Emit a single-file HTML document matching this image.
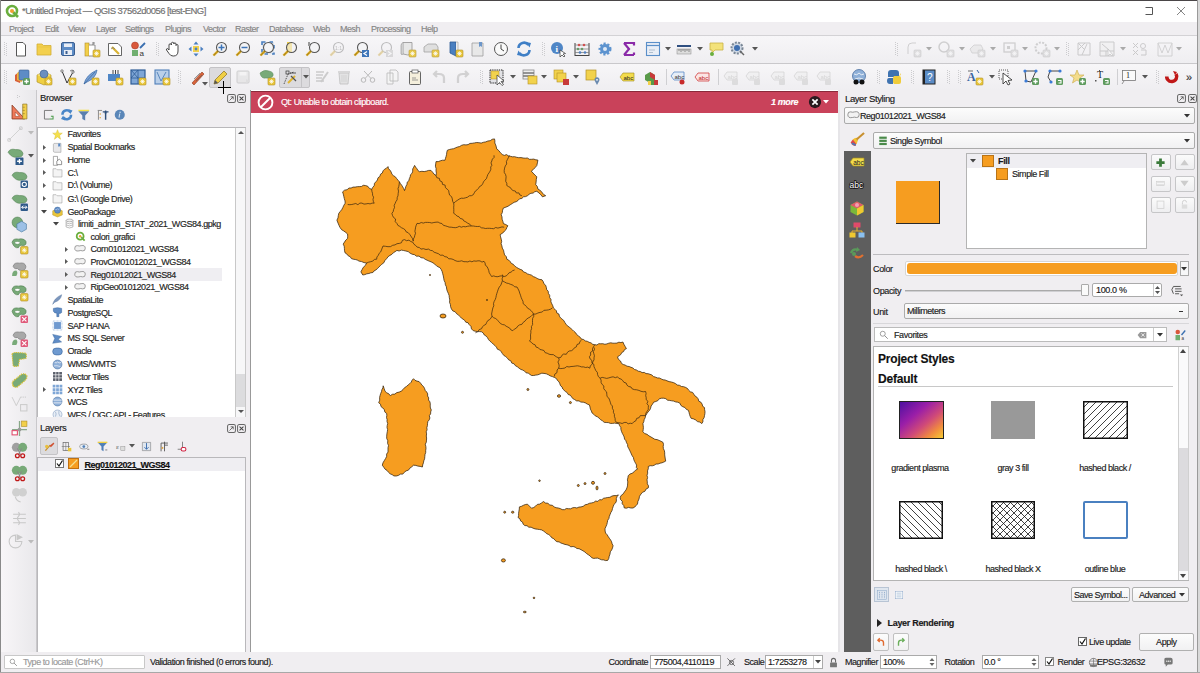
<!DOCTYPE html><html><head><meta charset="utf-8"><style>
*{margin:0;padding:0;box-sizing:border-box}
html,body{width:1200px;height:673px;overflow:hidden;background:#f0eef1;font-family:"Liberation Sans",sans-serif;position:relative}
.a{position:absolute}
.t{position:absolute;font-size:9px;line-height:12px;white-space:nowrap;color:#1a1a1a;letter-spacing:-0.35px;-webkit-text-stroke:0.15px currentColor}
svg.a{overflow:visible}
</style></head><body><div class="a" style="left:0px;top:0px;width:1200px;height:1px;background:#4a4648"></div>
<div class="a" style="left:1197px;top:0px;width:3px;height:673px;background:#d9d9d9"></div>
<div class="a" style="left:1197px;top:0px;width:1px;height:673px;background:#9a9a9a"></div>
<div class="a" style="left:0px;top:0px;width:1px;height:673px;background:#8a8a8a"></div>
<div class="a" style="left:1px;top:1px;width:1196px;height:21px;background:#fff"></div>
<svg class="a" style="left:5px;top:4px;" width="14" height="14" viewBox="0 0 14 14"><circle cx="7" cy="7" r="5" fill="none" stroke="#6aae3e" stroke-width="2.6"/><path d="M8,8 L13,13" stroke="#6aae3e" stroke-width="2.6"/><circle cx="7" cy="7" r="2" fill="#f0a030"/></svg>
<div class="t" style="left:22px;top:5px;color:#707070;font-size:9.5px;letter-spacing:-0.55px">*Untitled Project — QGIS 37562d0056 [test-ENG]</div>
<svg class="a" style="left:1145px;top:7px;" width="8" height="8" viewBox="0 0 8 8"><path d="M0.5,0.5 H7.5 V7.5 H0.5" fill="none" stroke="#555" stroke-width="1"/></svg>
<svg class="a" style="left:1177px;top:7px;" width="8" height="8" viewBox="0 0 8 8"><path d="M0,0 L8,8 M8,0 L0,8" stroke="#777" stroke-width="0.9"/></svg>
<div class="a" style="left:1px;top:22px;width:1196px;height:14px;background:#f0eef1"></div>
<div class="t" style="left:9px;top:22.8px;color:#858585;font-size:9px;letter-spacing:-0.5px">Project</div>
<div class="t" style="left:45px;top:22.8px;color:#858585;font-size:9px;letter-spacing:-0.5px">Edit</div>
<div class="t" style="left:68px;top:22.8px;color:#858585;font-size:9px;letter-spacing:-0.5px">View</div>
<div class="t" style="left:96px;top:22.8px;color:#858585;font-size:9px;letter-spacing:-0.5px">Layer</div>
<div class="t" style="left:125px;top:22.8px;color:#858585;font-size:9px;letter-spacing:-0.5px">Settings</div>
<div class="t" style="left:165px;top:22.8px;color:#858585;font-size:9px;letter-spacing:-0.5px">Plugins</div>
<div class="t" style="left:203px;top:22.8px;color:#858585;font-size:9px;letter-spacing:-0.5px">Vector</div>
<div class="t" style="left:235px;top:22.8px;color:#858585;font-size:9px;letter-spacing:-0.5px">Raster</div>
<div class="t" style="left:269px;top:22.8px;color:#858585;font-size:9px;letter-spacing:-0.5px">Database</div>
<div class="t" style="left:313px;top:22.8px;color:#858585;font-size:9px;letter-spacing:-0.5px">Web</div>
<div class="t" style="left:340px;top:22.8px;color:#858585;font-size:9px;letter-spacing:-0.5px">Mesh</div>
<div class="t" style="left:371px;top:22.8px;color:#858585;font-size:9px;letter-spacing:-0.5px">Processing</div>
<div class="t" style="left:421px;top:22.8px;color:#858585;font-size:9px;letter-spacing:-0.5px">Help</div>
<div class="a" style="left:1px;top:35px;width:1196px;height:1px;background:#d3d2d5"></div>
<div class="a" style="left:1px;top:36px;width:1196px;height:27px;background:linear-gradient(#f7f6f8,#efeef1)"></div>
<div class="a" style="left:1px;top:63px;width:1196px;height:1px;background:#c9c8cb"></div>
<div class="a" style="left:1px;top:64px;width:1196px;height:26px;background:linear-gradient(#f7f6f8,#efeef1)"></div>
<svg class="a" style="left:3.5px;top:42.0px" width="3" height="14" viewBox="0 0 3 14"><path d="M0.5,0 V14 M2.5,1 V14" stroke="#b5b5b8" stroke-width="0.8" stroke-dasharray="0.8 1.2"/></svg>
<svg class="a" style="left:13.0px;top:41.0px;" width="16" height="16" viewBox="0 0 16 16"><path d="M3.5,1.5 H10 L12.5,4 V15 H3.5Z" fill="#fff" stroke="#555" stroke-width="1"/></svg>
<svg class="a" style="left:36.0px;top:41.0px;" width="16" height="16" viewBox="0 0 16 16"><path d="M1,3 H6 L7.5,4.5 H15 V14 H1Z" fill="#f3d04e" stroke="#d2ad33" stroke-width="0.8"/><path d="M1,6 H15" stroke="#e6c040" stroke-width="0.6"/></svg>
<svg class="a" style="left:59.5px;top:41.0px;" width="16" height="16" viewBox="0 0 16 16"><rect x="1.5" y="1.5" width="13" height="13" rx="1.5" fill="#5d8cc6" stroke="#3b5f91" stroke-width="1"/><rect x="4" y="2.5" width="8" height="3.5" fill="#e8edf5"/><rect x="4" y="9" width="8" height="5" fill="#e8edf5"/><rect x="5.5" y="10" width="2" height="3" fill="#3b5f91"/></svg>
<svg class="a" style="left:84.0px;top:41.0px;" width="16" height="16" viewBox="0 0 16 16"><rect x="1" y="2" width="4" height="13" fill="#f2cf4a" stroke="#b08c2a" stroke-width="0.6"/><path d="M5,4 H11 V15 H5" fill="#fff" stroke="#777" stroke-width="0.8"/><path d="M9,1 V4 M9,2 h2" stroke="#555" stroke-width="0.7"/><rect x="9" y="9" width="7" height="7" rx="1" fill="#e9c73c" stroke="#b39027" stroke-width="0.6"/><path d="M12.5,10.3 v4.4 M10.3,12.5 h4.4 M11,11 l3,3 M14,11 l-3,3" stroke="#fff" stroke-width="0.7"/></svg>
<svg class="a" style="left:107.0px;top:41.0px;" width="16" height="16" viewBox="0 0 16 16"><path d="M1.5,2.5 H11 L14.5,6 V14.5 H1.5Z" fill="#fff" stroke="#555" stroke-width="0.9"/><path d="M5,6 L12,13" stroke="#d9b334" stroke-width="2.2"/><path d="M4,8 q2,-3 4,0" fill="none" stroke="#777" stroke-width="0.7"/></svg>
<svg class="a" style="left:129.5px;top:41.0px;" width="16" height="16" viewBox="0 0 16 16"><circle cx="5" cy="4.5" r="3.5" fill="#d9583b" stroke="#a03020" stroke-width="0.5"/><rect x="2" y="9" width="6" height="6" fill="#6fae6f"/><path d="M10,7 L15,2" stroke="#3a6fb0" stroke-width="1.8"/><text x="9.5" y="15" font-size="8" font-family="Liberation Sans" fill="#333">a</text></svg>
<svg class="a" style="left:156.0px;top:42.0px" width="3" height="14" viewBox="0 0 3 14"><path d="M0.5,0 V14 M2.5,1 V14" stroke="#b5b5b8" stroke-width="0.8" stroke-dasharray="0.8 1.2"/></svg>
<svg class="a" style="left:165.0px;top:41.0px;" width="16" height="16" viewBox="0 0 16 16"><path d="M4,9 V4 q0,-1.2 1.2,-1.2 q1.2,0 1.2,1.2 V2.5 q0,-1.2 1.2,-1.2 q1.2,0 1.2,1.2 V3 q0,-1.1 1.1,-1.1 q1.1,0 1.1,1.1 V4.5 q0,-1 1,-1 q1,0 1,1 V10 q0,5 -4.5,5 H8 q-2.5,0 -4,-2.5 L1.5,9 q-0.5,-1.2 0.8,-1.4 q0.9,-0.1 1.7,1.4Z" fill="#fff" stroke="#333" stroke-width="0.9"/></svg>
<svg class="a" style="left:188.0px;top:41.0px;" width="16" height="16" viewBox="0 0 16 16"><rect x="5" y="5" width="6" height="6" fill="#f2d24c"/><path d="M8,0.5 L10.5,3.5 H5.5Z M8,15.5 L10.5,12.5 H5.5Z M0.5,8 L3.5,5.5 V10.5Z M15.5,8 L12.5,5.5 V10.5Z" fill="#4a7fc0"/><circle cx="8" cy="8" r="1.4" fill="#4a7fc0"/></svg>
<svg class="a" style="left:212.0px;top:41.0px;" width="16" height="16" viewBox="0 0 16 16"><circle cx="9.5" cy="6.5" r="5" fill="#f4f4f6" stroke="#555" stroke-width="1.1"/><path d="M9.5,3.5 v6 M6.5,6.5 h6" stroke="#3d74b8" stroke-width="1.5"/><path d="M6,10 L1.5,14.5" stroke="#d6a51c" stroke-width="2.4"/><path d="M6,10 L1.5,14.5" stroke="#333" stroke-width="0.6" stroke-dasharray="1 1.5"/></svg>
<svg class="a" style="left:235.3px;top:41.0px;" width="16" height="16" viewBox="0 0 16 16"><circle cx="9.5" cy="6.5" r="5" fill="#f4f4f6" stroke="#555" stroke-width="1.1"/><path d="M6.5,6.5 h6" stroke="#3d74b8" stroke-width="1.5"/><path d="M6,10 L1.5,14.5" stroke="#d6a51c" stroke-width="2.4"/><path d="M6,10 L1.5,14.5" stroke="#333" stroke-width="0.6" stroke-dasharray="1 1.5"/></svg>
<svg class="a" style="left:258.7px;top:41.0px;" width="16" height="16" viewBox="0 0 16 16"><rect x="3" y="1" width="12" height="12" fill="#dfe6ef" stroke="#4a7fc0" stroke-width="1.6" stroke-dasharray="3.5 4"/><circle cx="9.5" cy="6.5" r="5" fill="#f4f4f6" stroke="#555" stroke-width="1.1"/><path d="M6,10 L1.5,14.5" stroke="#d6a51c" stroke-width="2.4"/><path d="M6,10 L1.5,14.5" stroke="#333" stroke-width="0.6" stroke-dasharray="1 1.5"/></svg>
<svg class="a" style="left:282.0px;top:41.0px;" width="16" height="16" viewBox="0 0 16 16"><rect x="5" y="1" width="5" height="10" fill="#f2d24c"/><circle cx="9.5" cy="6.5" r="5" fill="#f4f4f6" fill-opacity="0.6" stroke="#555" stroke-width="1.1"/><path d="M6,10 L1.5,14.5" stroke="#d6a51c" stroke-width="2.4"/><path d="M6,10 L1.5,14.5" stroke="#333" stroke-width="0.6" stroke-dasharray="1 1.5"/></svg>
<svg class="a" style="left:305.3px;top:41.0px;" width="16" height="16" viewBox="0 0 16 16"><circle cx="9.5" cy="6.5" r="5" fill="#f4f4f6" stroke="#555" stroke-width="1.1"/><rect x="3" y="1" width="2" height="4" fill="#999"/><path d="M6,10 L1.5,14.5" stroke="#d6a51c" stroke-width="2.4"/><path d="M6,10 L1.5,14.5" stroke="#333" stroke-width="0.6" stroke-dasharray="1 1.5"/></svg>
<svg class="a" style="left:328.7px;top:41.0px;opacity:0.35;" width="16" height="16" viewBox="0 0 16 16"><circle cx="9.5" cy="6.5" r="5" fill="#f4f4f6" stroke="#555" stroke-width="1.1"/><text x="6" y="9" font-size="5" fill="#555">1:1</text><path d="M6,10 L1.5,14.5" stroke="#d6a51c" stroke-width="2.4"/><path d="M6,10 L1.5,14.5" stroke="#333" stroke-width="0.6" stroke-dasharray="1 1.5"/></svg>
<svg class="a" style="left:352.8px;top:41.0px;" width="16" height="16" viewBox="0 0 16 16"><circle cx="9.5" cy="6.5" r="5" fill="#f4f4f6" stroke="#555" stroke-width="1.1"/><path d="M6,10 L1.5,14.5" stroke="#d6a51c" stroke-width="2.4"/><path d="M6,10 L1.5,14.5" stroke="#333" stroke-width="0.6" stroke-dasharray="1 1.5"/><rect x="9" y="9" width="7" height="7" fill="#3d74b8"/><path d="M14,10.5 L11,12.5 L14,14.5" fill="none" stroke="#fff" stroke-width="1.2"/></svg>
<svg class="a" style="left:377.0px;top:41.0px;opacity:0.35;" width="16" height="16" viewBox="0 0 16 16"><circle cx="9.5" cy="6.5" r="5" fill="#f4f4f6" stroke="#555" stroke-width="1.1"/><path d="M6,10 L1.5,14.5" stroke="#d6a51c" stroke-width="2.4"/><path d="M6,10 L1.5,14.5" stroke="#333" stroke-width="0.6" stroke-dasharray="1 1.5"/><rect x="9" y="9" width="7" height="7" fill="#aaa"/><path d="M11,10.5 L14,12.5 L11,14.5" fill="none" stroke="#fff" stroke-width="1.2"/></svg>
<svg class="a" style="left:399.5px;top:41.0px;opacity:0.9;" width="16" height="16" viewBox="0 0 16 16"><path d="M3,1.5 H12 V13 q-4,2 -9,0Z" fill="#e6e6e6" stroke="#888" stroke-width="0.8"/><path d="M3,1.5 q-2,1 -2,3 V13 q1,1.5 2,0" fill="#ccc" stroke="#888" stroke-width="0.6"/><rect x="9" y="9" width="7" height="7" rx="1" fill="#e9c73c" stroke="#b39027" stroke-width="0.6"/><path d="M12.5,10.3 v4.4 M10.3,12.5 h4.4 M11,11 l3,3 M14,11 l-3,3" stroke="#fff" stroke-width="0.7"/></svg>
<svg class="a" style="left:422.8px;top:41.0px;opacity:0.9;" width="16" height="16" viewBox="0 0 16 16"><path d="M1,6 L5,3 H13 L15,6 V11 H1Z" fill="#ddd" stroke="#999" stroke-width="0.8"/><rect x="9" y="9" width="7" height="7" rx="1" fill="#e9c73c" stroke="#b39027" stroke-width="0.6"/><path d="M12.5,10.3 v4.4 M10.3,12.5 h4.4 M11,11 l3,3 M14,11 l-3,3" stroke="#fff" stroke-width="0.7"/></svg>
<svg class="a" style="left:447.0px;top:41.0px;" width="16" height="16" viewBox="0 0 16 16"><path d="M3,1 H9 V15 L3,12Z" fill="#4a7fc0" stroke="#2e5c96" stroke-width="0.8"/><path d="M9,1 H11 V14 H9" fill="#eee" stroke="#999" stroke-width="0.6"/><rect x="9" y="9" width="7" height="7" rx="1" fill="#e9c73c" stroke="#b39027" stroke-width="0.6"/><path d="M12.5,10.3 v4.4 M10.3,12.5 h4.4 M11,11 l3,3 M14,11 l-3,3" stroke="#fff" stroke-width="0.7"/></svg>
<svg class="a" style="left:469.5px;top:41.0px;opacity:0.8;" width="16" height="16" viewBox="0 0 16 16"><path d="M2,2 H13 V15 H2Z" fill="#e6e6e6" stroke="#888" stroke-width="0.8"/><path d="M9,1 V6 L10.5,5 L12,6 V1" fill="#4a7fc0"/></svg>
<svg class="a" style="left:492.8px;top:41.0px;" width="16" height="16" viewBox="0 0 16 16"><circle cx="8" cy="8" r="6.5" fill="#fafafa" stroke="#555" stroke-width="1"/><path d="M8,3.5 V8 L11,10" fill="none" stroke="#444" stroke-width="1"/></svg>
<svg class="a" style="left:516.2px;top:41.0px;" width="16" height="16" viewBox="0 0 16 16"><path d="M2.5,7 A5.5,5.5 0 0 1 12.5,4" fill="none" stroke="#3f7fc6" stroke-width="2.6"/><path d="M13.5,9 A5.5,5.5 0 0 1 3.5,12" fill="none" stroke="#3f7fc6" stroke-width="2.6"/><path d="M10,1 L15,2 L13.5,6.5Z M6,15 L1,14 L2.5,9.5Z" fill="#3f7fc6"/></svg>
<svg class="a" style="left:541.8px;top:42.0px" width="3" height="14" viewBox="0 0 3 14"><path d="M0.5,0 V14 M2.5,1 V14" stroke="#b5b5b8" stroke-width="0.8" stroke-dasharray="0.8 1.2"/></svg>
<svg class="a" style="left:549.5px;top:41.0px;" width="16" height="16" viewBox="0 0 16 16"><circle cx="7" cy="7" r="6" fill="#4f86c6"/><text x="5.5" y="11" font-size="9" font-weight="bold" fill="#fff" font-family="Liberation Serif">i</text><path d="M10,9 L10,16 L12,14 L14,16 L15,15 L13,13 L15.5,12.5Z" fill="#fff" stroke="#333" stroke-width="0.7"/></svg>
<svg class="a" style="left:573.7px;top:41.0px;" width="16" height="16" viewBox="0 0 16 16"><path d="M1,2 V15 M15,2 V15 M1,14.5 H15" stroke="#444" stroke-width="1"/><path d="M1,4 H15 M1,8 H15 M1,11.5 H15" stroke="#777" stroke-width="0.7"/><circle cx="5" cy="4" r="1.3" fill="#d05050"/><circle cx="10" cy="4" r="1.3" fill="#d05050"/><circle cx="4" cy="8" r="1.3" fill="#6a9a6a"/><circle cx="8" cy="8" r="1.3" fill="#6a9a6a"/><circle cx="6" cy="11.5" r="1.3" fill="#5080c0"/><circle cx="11" cy="11.5" r="1.3" fill="#5080c0"/></svg>
<svg class="a" style="left:597.0px;top:41.0px;" width="16" height="16" viewBox="0 0 16 16"><circle cx="8" cy="8" r="5" fill="#5d93cf" stroke="#5d93cf" stroke-width="3" stroke-dasharray="2 1.6"/><circle cx="8" cy="8" r="2" fill="#dfe9f5"/></svg>
<svg class="a" style="left:621.0px;top:41.0px;" width="16" height="16" viewBox="0 0 16 16"><path d="M3,2 H13 V4.5 M13,14 V11.5 M3,14 H13 M3,2 L8,8 L3,14" fill="none" stroke="#8a2aa8" stroke-width="2.2"/></svg>
<svg class="a" style="left:644.5px;top:41.0px;" width="16" height="16" viewBox="0 0 16 16"><rect x="1.5" y="1.5" width="13" height="13" fill="#e9eef6" stroke="#5b8fc9" stroke-width="1.1"/><path d="M1.5,4.5 H14.5" stroke="#5b8fc9" stroke-width="1.2"/><path d="M4,9 H10 M4,11.5 H8" stroke="#9ab" stroke-width="0.7"/></svg>
<svg class="a" style="left:665.3px;top:47px" width="6" height="4" viewBox="0 0 6 4"><path d="M0,0 H6 L3,3.5Z" fill="#555"/></svg>
<svg class="a" style="left:676.2px;top:41.0px;" width="16" height="16" viewBox="0 0 16 16"><rect x="1" y="4" width="14" height="2" fill="#2f4f80"/><rect x="1" y="8" width="14" height="5" fill="#ddd" stroke="#888" stroke-width="0.5"/><path d="M3,8 v2 M5,8 v3 M7,8 v2 M9,8 v3 M11,8 v2 M13,8 v3" stroke="#555" stroke-width="0.6"/></svg>
<svg class="a" style="left:697px;top:47px" width="6" height="4" viewBox="0 0 6 4"><path d="M0,0 H6 L3,3.5Z" fill="#555"/></svg>
<svg class="a" style="left:707.8px;top:41.0px;" width="16" height="16" viewBox="0 0 16 16"><path d="M2,2 H15 V9 H7 L4,12 V9 H2Z" fill="#f3e27a" stroke="#c9b344" stroke-width="0.8"/><circle cx="4" cy="13" r="2" fill="#6aae3e"/></svg>
<svg class="a" style="left:730.3px;top:41.0px;" width="16" height="16" viewBox="0 0 16 16"><circle cx="7" cy="7" r="5.5" fill="#cfd8e4" stroke="#7a8796" stroke-width="2" stroke-dasharray="2 1.3"/><circle cx="7" cy="7" r="3" fill="#3f6fb0"/><path d="M10,10 L14,14" stroke="#666" stroke-width="1.5"/></svg>
<svg class="a" style="left:752px;top:47px" width="6" height="4" viewBox="0 0 6 4"><path d="M0,0 H6 L3,3.5Z" fill="#555"/></svg>
<svg class="a" style="left:895.2px;top:42.0px" width="3" height="14" viewBox="0 0 3 14"><path d="M0.5,0 V14 M2.5,1 V14" stroke="#b5b5b8" stroke-width="0.8" stroke-dasharray="0.8 1.2"/></svg>
<svg class="a" style="left:904.5px;top:41.0px;opacity:0.4;filter:grayscale(1);" width="16" height="16" viewBox="0 0 16 16"><path d="M3,13 V6 q0,-4 4,-4 H11" fill="none" stroke="#999" stroke-width="1"/><rect x="9" y="9" width="7" height="7" rx="1" fill="#e9c73c" stroke="#b39027" stroke-width="0.6"/><path d="M12.5,10.3 v4.4 M10.3,12.5 h4.4 M11,11 l3,3 M14,11 l-3,3" stroke="#fff" stroke-width="0.7"/></svg>
<svg class="a" style="left:926px;top:47px" width="6" height="4" viewBox="0 0 6 4"><path d="M0,0 H6 L3,3.5Z" fill="#aaa"/></svg>
<svg class="a" style="left:937.8px;top:41.0px;opacity:0.4;filter:grayscale(1);" width="16" height="16" viewBox="0 0 16 16"><circle cx="6" cy="6" r="5" fill="none" stroke="#999" stroke-width="1.5"/><rect x="9" y="9" width="7" height="7" rx="1" fill="#e9c73c" stroke="#b39027" stroke-width="0.6"/><path d="M12.5,10.3 v4.4 M10.3,12.5 h4.4 M11,11 l3,3 M14,11 l-3,3" stroke="#fff" stroke-width="0.7"/></svg>
<svg class="a" style="left:958.5px;top:47px" width="6" height="4" viewBox="0 0 6 4"><path d="M0,0 H6 L3,3.5Z" fill="#aaa"/></svg>
<svg class="a" style="left:969.0px;top:41.0px;opacity:0.4;filter:grayscale(1);" width="16" height="16" viewBox="0 0 16 16"><path d="M1,8 L5,4 H12 L14,8 L10,12 H3Z" fill="#ddd" stroke="#999" stroke-width="0.8"/><rect x="9" y="9" width="7" height="7" rx="1" fill="#e9c73c" stroke="#b39027" stroke-width="0.6"/><path d="M12.5,10.3 v4.4 M10.3,12.5 h4.4 M11,11 l3,3 M14,11 l-3,3" stroke="#fff" stroke-width="0.7"/></svg>
<svg class="a" style="left:989.7px;top:47px" width="6" height="4" viewBox="0 0 6 4"><path d="M0,0 H6 L3,3.5Z" fill="#aaa"/></svg>
<svg class="a" style="left:1002.4px;top:41.0px;opacity:0.4;filter:grayscale(1);" width="16" height="16" viewBox="0 0 16 16"><rect x="2" y="2" width="11" height="9" fill="none" stroke="#999" stroke-width="1.3"/><rect x="5" y="5" width="3" height="3" fill="#999"/><rect x="9" y="9" width="7" height="7" rx="1" fill="#e9c73c" stroke="#b39027" stroke-width="0.6"/><path d="M12.5,10.3 v4.4 M10.3,12.5 h4.4 M11,11 l3,3 M14,11 l-3,3" stroke="#fff" stroke-width="0.7"/></svg>
<svg class="a" style="left:1022px;top:47px" width="6" height="4" viewBox="0 0 6 4"><path d="M0,0 H6 L3,3.5Z" fill="#aaa"/></svg>
<svg class="a" style="left:1033.7px;top:41.0px;opacity:0.4;filter:grayscale(1);" width="16" height="16" viewBox="0 0 16 16"><circle cx="7" cy="7" r="5.5" fill="none" stroke="#999" stroke-width="2" stroke-dasharray="2 1.3"/><rect x="9" y="9" width="7" height="7" rx="1" fill="#e9c73c" stroke="#b39027" stroke-width="0.6"/><path d="M12.5,10.3 v4.4 M10.3,12.5 h4.4 M11,11 l3,3 M14,11 l-3,3" stroke="#fff" stroke-width="0.7"/></svg>
<svg class="a" style="left:1054.3px;top:47px" width="6" height="4" viewBox="0 0 6 4"><path d="M0,0 H6 L3,3.5Z" fill="#aaa"/></svg>
<svg class="a" style="left:1066.2px;top:42.0px" width="3" height="14" viewBox="0 0 3 14"><path d="M0.5,0 V14 M2.5,1 V14" stroke="#b5b5b8" stroke-width="0.8" stroke-dasharray="0.8 1.2"/></svg>
<svg class="a" style="left:1076.4px;top:41.0px;opacity:0.45;filter:grayscale(1);" width="16" height="16" viewBox="0 0 16 16"><path d="M2,2 H14 V14 H2Z M2,2 L9,9 M2,9 L9,2 M11,3 L6,14" fill="none" stroke="#999" stroke-width="1"/></svg>
<svg class="a" style="left:1099.3px;top:41.0px;opacity:0.45;filter:grayscale(1);" width="16" height="16" viewBox="0 0 16 16"><path d="M1,1 H15 V15 H1Z M1,10 H15 M7,10 V15 M3,3 L10,9" fill="#eee" stroke="#999" stroke-width="1"/><path d="M9,8 L9,15 L11,13 L13,15 L14,14Z" fill="#fff" stroke="#888" stroke-width="0.7"/></svg>
<svg class="a" style="left:1120px;top:47px" width="6" height="4" viewBox="0 0 6 4"><path d="M0,0 H6 L3,3.5Z" fill="#aaa"/></svg>
<svg class="a" style="left:1131.6px;top:41.0px;opacity:0.45;filter:grayscale(1);" width="16" height="16" viewBox="0 0 16 16"><path d="M1,2 L6,7 M6,2 L1,7 M1,9 L6,14 M6,9 L1,14" stroke="#999" stroke-width="1"/><circle cx="11" cy="5" r="2.5" fill="none" stroke="#999"/><path d="M9,9 H14 V14 H9" fill="none" stroke="#999"/></svg>
<svg class="a" style="left:1156.6px;top:41.0px;opacity:0.45;filter:grayscale(1);" width="16" height="16" viewBox="0 0 16 16"><path d="M1,2 H15 V15 H1Z M1,2 L5,12 L8,4 L11,12 L15,2" fill="none" stroke="#aaa" stroke-width="1"/></svg>
<svg class="a" style="left:1176px;top:47px" width="6" height="4" viewBox="0 0 6 4"><path d="M0,0 H6 L3,3.5Z" fill="#aaa"/></svg>
<svg class="a" style="left:3.5px;top:70.0px" width="3" height="14" viewBox="0 0 3 14"><path d="M0.5,0 V14 M2.5,1 V14" stroke="#b5b5b8" stroke-width="0.8" stroke-dasharray="0.8 1.2"/></svg>
<svg class="a" style="left:13.7px;top:69.0px;" width="16" height="16" viewBox="0 0 16 16"><path d="M1,6 L5,3 L8,5 L6,14 L1,12Z" fill="#d75f3a"/><path d="M3,4 L7,2 L10,4 L8,13 L3,11Z" fill="#f0b43c"/><rect x="5" y="1" width="10" height="10" rx="1" fill="#5d8cc6" stroke="#3b5f91" stroke-width="0.6"/><rect x="9" y="9" width="7" height="7" rx="1.5" fill="#5e9b5e"/><path d="M12.5,10.3 v4.4 M10.3,12.5 h4.4" stroke="#fff" stroke-width="1.4"/></svg>
<svg class="a" style="left:36.0px;top:69.0px;" width="16" height="16" viewBox="0 0 16 16"><path d="M1,6 L8,3 L15,6 V13 L8,16 L1,13Z" fill="#efcf42" stroke="#a88a20" stroke-width="0.6"/><path d="M1,6 L8,9 L15,6 L8,3Z" fill="#f6e07a"/><circle cx="8" cy="5" r="4" fill="#6a8fc0" stroke="#3b5f91" stroke-width="0.6"/><rect x="9" y="9" width="7" height="7" rx="1" fill="#e9c73c" stroke="#b39027" stroke-width="0.6"/><path d="M12.5,10.3 v4.4 M10.3,12.5 h4.4 M11,11 l3,3 M14,11 l-3,3" stroke="#fff" stroke-width="0.7"/></svg>
<svg class="a" style="left:60.0px;top:69.0px;" width="16" height="16" viewBox="0 0 16 16"><path d="M2,2 L7,14 L13,3" fill="none" stroke="#333" stroke-width="1"/><circle cx="2" cy="2" r="1.2" fill="#fff" stroke="#333" stroke-width="0.6"/><circle cx="13" cy="3" r="1.2" fill="#fff" stroke="#333" stroke-width="0.6"/><path d="M10,2 q2,-2 4,0" fill="none" stroke="#333" stroke-width="0.6"/><rect x="9" y="9" width="7" height="7" rx="1" fill="#e9c73c" stroke="#b39027" stroke-width="0.6"/><path d="M12.5,10.3 v4.4 M10.3,12.5 h4.4 M11,11 l3,3 M14,11 l-3,3" stroke="#fff" stroke-width="0.7"/></svg>
<svg class="a" style="left:83.0px;top:69.0px;" width="16" height="16" viewBox="0 0 16 16"><path d="M1,15 Q3,6 14,1 Q13,9 4,13Z" fill="#7aa3d6" stroke="#3b6aa8" stroke-width="0.7"/><path d="M1,15 L12,3" stroke="#2f5a90" stroke-width="0.6"/><rect x="9" y="9" width="7" height="7" rx="1" fill="#e9c73c" stroke="#b39027" stroke-width="0.6"/><path d="M12.5,10.3 v4.4 M10.3,12.5 h4.4 M11,11 l3,3 M14,11 l-3,3" stroke="#fff" stroke-width="0.7"/></svg>
<svg class="a" style="left:107.0px;top:69.0px;" width="16" height="16" viewBox="0 0 16 16"><rect x="1" y="5" width="12" height="7" fill="#4f86c6"/><path d="M6,1 V5 M8.5,1 V5 M11,1 V5" stroke="#333" stroke-width="0.9"/><rect x="9" y="9" width="7" height="7" rx="1" fill="#e9c73c" stroke="#b39027" stroke-width="0.6"/><path d="M12.5,10.3 v4.4 M10.3,12.5 h4.4 M11,11 l3,3 M14,11 l-3,3" stroke="#fff" stroke-width="0.7"/></svg>
<svg class="a" style="left:130.0px;top:69.0px;" width="16" height="16" viewBox="0 0 16 16"><rect x="1" y="1" width="14" height="14" fill="#7ea6d6" stroke="#2e5c96" stroke-width="1.2"/><path d="M1,9 H15 M8,1 V15 M1,1 L8,9 M8,1 L1,9" stroke="#2e5c96" stroke-width="0.8"/><rect x="9" y="9" width="7" height="7" rx="1" fill="#e9c73c" stroke="#b39027" stroke-width="0.6"/><path d="M12.5,10.3 v4.4 M10.3,12.5 h4.4 M11,11 l3,3 M14,11 l-3,3" stroke="#fff" stroke-width="0.7"/></svg>
<svg class="a" style="left:154.0px;top:69.0px;" width="16" height="16" viewBox="0 0 16 16"><rect x="1" y="1" width="14" height="14" fill="#b9cfe9" stroke="#4f7fb8" stroke-width="1.1"/><path d="M3,3 L7,12 L12,3" fill="none" stroke="#4f7fb8" stroke-width="0.9"/><rect x="9" y="9" width="7" height="7" rx="1" fill="#e9c73c" stroke="#b39027" stroke-width="0.6"/><path d="M12.5,10.3 v4.4 M10.3,12.5 h4.4 M11,11 l3,3 M14,11 l-3,3" stroke="#fff" stroke-width="0.7"/></svg>
<svg class="a" style="left:177.5px;top:70.0px" width="3" height="14" viewBox="0 0 3 14"><path d="M0.5,0 V14 M2.5,1 V14" stroke="#b5b5b8" stroke-width="0.8" stroke-dasharray="0.8 1.2"/></svg>
<svg class="a" style="left:188.7px;top:69.0px;" width="16" height="16" viewBox="0 0 16 16"><path d="M3,14 L13,3 L15,5 L5,16Z" fill="#d9633b" stroke="#8a3a20" stroke-width="0.6"/><path d="M5,10 L11,4 M7,12 L13,6" stroke="#555" stroke-width="0.6"/></svg>
<svg class="a" style="left:202px;top:82px" width="6" height="4" viewBox="0 0 6 4"><path d="M0,0 H6 L3,3.5Z" fill="#555"/></svg>
<div class="a" style="left:209px;top:67px;width:22px;height:21px;background:#dcdbde;border:1px solid #c4c3c6;border-radius:2px"></div>
<svg class="a" style="left:212.0px;top:69.0px;" width="16" height="16" viewBox="0 0 16 16"><path d="M2,15 L3,11 L12,2 L15,5 L6,14Z" fill="#f0cf45" stroke="#8a7020" stroke-width="0.7"/><path d="M2,15 L3,11 L6,14Z" fill="#555"/></svg>
<svg class="a" style="left:235.0px;top:69.0px;opacity:0.5;" width="16" height="16" viewBox="0 0 16 16"><rect x="2" y="2" width="12" height="12" rx="1" fill="#ddd" stroke="#aaa" stroke-width="1"/><rect x="4.5" y="3" width="7" height="3.5" fill="#f4f4f4"/><path d="M11,10 L15,12 L11,14" fill="#ccc"/></svg>
<svg class="a" style="left:258.7px;top:69.0px;" width="16" height="16" viewBox="0 0 16 16"><path d="M1,4 Q5,0 10,2 Q15,3 14,7 Q12,10 7,9 Q2,10 1,4Z" fill="#78aa78" stroke="#5a8a5a" stroke-width="0.5"/><rect x="9" y="9" width="7" height="7" rx="1" fill="#e9c73c" stroke="#b39027" stroke-width="0.6"/><path d="M12.5,10.3 v4.4 M10.3,12.5 h4.4 M11,11 l3,3 M14,11 l-3,3" stroke="#fff" stroke-width="0.7"/></svg>
<div class="a" style="left:279px;top:67px;width:31px;height:21px;background:#dcdbde;border:1px solid #c4c3c6;border-radius:2px"></div>
<div class="a" style="left:301px;top:67px;width:1px;height:21px;background:#c4c3c6"></div>
<svg class="a" style="left:282.0px;top:69.0px;" width="16" height="16" viewBox="0 0 16 16"><path d="M2,15 L6,5 L12,3" fill="none" stroke="#333" stroke-width="0.8" stroke-dasharray="1.5 1"/><rect x="4" y="2" width="3" height="3" fill="none" stroke="#333" stroke-width="0.7"/><path d="M8,4 H14" stroke="#333" stroke-width="0.8"/><path d="M6,14 L13,7" stroke="#e0b530" stroke-width="2"/><path d="M9,7 L14,12" stroke="#555" stroke-width="1.2"/></svg>
<svg class="a" style="left:302.5px;top:75px" width="6" height="4" viewBox="0 0 6 4"><path d="M0,0 H6 L3,3.5Z" fill="#555"/></svg>
<svg class="a" style="left:313.7px;top:69.0px;opacity:0.7;" width="16" height="16" viewBox="0 0 16 16"><path d="M2,3 H10 M2,6 H9 M2,9 H8 M2,12 H10" stroke="#bbb" stroke-width="1.4"/><path d="M7,13 L14,3" stroke="#bbb" stroke-width="2"/></svg>
<svg class="a" style="left:336.0px;top:69.0px;opacity:0.7;" width="16" height="16" viewBox="0 0 16 16"><path d="M3,4 H13 L12,15 H4Z" fill="#ddd" stroke="#aaa" stroke-width="0.8"/><rect x="2" y="2" width="12" height="2" fill="#ccc"/><path d="M6,6 V13 M8,6 V13 M10,6 V13" stroke="#bbb" stroke-width="0.7"/></svg>
<svg class="a" style="left:360.0px;top:69.0px;opacity:0.8;" width="16" height="16" viewBox="0 0 16 16"><circle cx="3.5" cy="11" r="2.3" fill="none" stroke="#aaa" stroke-width="1"/><circle cx="12.5" cy="11" r="2.3" fill="none" stroke="#aaa" stroke-width="1"/><path d="M5,9.5 L12,2 M11,9.5 L4,2" stroke="#aaa" stroke-width="1"/></svg>
<svg class="a" style="left:383.7px;top:69.0px;opacity:0.8;" width="16" height="16" viewBox="0 0 16 16"><path d="M6,1 H12 L14,3 V12 H6Z M3,4 H9 V15 H3Z" fill="#f5f5f5" stroke="#aaa" stroke-width="0.8"/></svg>
<svg class="a" style="left:407.0px;top:69.0px;" width="16" height="16" viewBox="0 0 16 16"><rect x="2.5" y="2.5" width="11" height="13" rx="1" fill="#f5efdc" stroke="#555" stroke-width="0.9"/><rect x="5" y="1" width="6" height="3" fill="#fff" stroke="#555" stroke-width="0.7"/><path d="M5,9 H9 M5,11 H11" stroke="#777" stroke-width="0.7"/></svg>
<svg class="a" style="left:431.0px;top:69.0px;opacity:0.6;" width="16" height="16" viewBox="0 0 16 16"><path d="M13,14 V9 Q13,5 8,5 H3 M6,2 L3,5 L6,8" fill="none" stroke="#bbb" stroke-width="2.2"/></svg>
<svg class="a" style="left:454.5px;top:69.0px;opacity:0.6;" width="16" height="16" viewBox="0 0 16 16"><path d="M3,14 V9 Q3,5 8,5 H13 M10,2 L13,5 L10,8" fill="none" stroke="#bbb" stroke-width="2.2"/></svg>
<svg class="a" style="left:480.2px;top:70.0px" width="3" height="14" viewBox="0 0 3 14"><path d="M0.5,0 V14 M2.5,1 V14" stroke="#b5b5b8" stroke-width="0.8" stroke-dasharray="0.8 1.2"/></svg>
<svg class="a" style="left:488.7px;top:69.0px;" width="16" height="16" viewBox="0 0 16 16"><rect x="1" y="1" width="13" height="13" fill="#e2e2e6" stroke="#222" stroke-width="1" stroke-dasharray="1.3 0.9"/><rect x="2" y="2" width="8" height="8" fill="#f2d24c" stroke="#b39027" stroke-width="0.5"/><path d="M8,6 L8,16 L10.5,13.5 L13,16.5 L14.5,15.5 L12,12.5 L15,12Z" fill="#fff" stroke="#333" stroke-width="0.7"/></svg>
<svg class="a" style="left:509.5px;top:75px" width="6" height="4" viewBox="0 0 6 4"><path d="M0,0 H6 L3,3.5Z" fill="#555"/></svg>
<svg class="a" style="left:522.0px;top:69.0px;" width="16" height="16" viewBox="0 0 16 16"><rect x="1" y="1" width="11" height="9" fill="#eee" stroke="#888" stroke-width="0.8"/><path d="M1,4 H12 M1,7 H12" stroke="#777" stroke-width="1.3"/><rect x="6" y="7" width="9" height="8" fill="#f2d24c" stroke="#b39027" stroke-width="0.6"/></svg>
<svg class="a" style="left:541px;top:75px" width="6" height="4" viewBox="0 0 6 4"><path d="M0,0 H6 L3,3.5Z" fill="#555"/></svg>
<svg class="a" style="left:552.8px;top:69.0px;" width="16" height="16" viewBox="0 0 16 16"><rect x="1" y="1" width="9" height="9" fill="#f2d24c" stroke="#b39027" stroke-width="0.6"/><rect x="4" y="4" width="9" height="9" fill="#f2d24c" stroke="#b39027" stroke-width="0.6"/><rect x="10" y="10" width="6" height="6" fill="#c83a3a"/></svg>
<svg class="a" style="left:572.8px;top:75px" width="6" height="4" viewBox="0 0 6 4"><path d="M0,0 H6 L3,3.5Z" fill="#555"/></svg>
<svg class="a" style="left:584.5px;top:69.0px;" width="16" height="16" viewBox="0 0 16 16"><rect x="1" y="1" width="10" height="10" fill="#f2d24c" stroke="#b39027" stroke-width="0.7"/><path d="M12,16 L9.8,12 A2.5,2.5 0 1 1 14.2,12Z" fill="#6a8ab0"/><circle cx="12" cy="10.8" r="0.9" fill="#fff"/></svg>
<svg class="a" style="left:618.7px;top:69.0px;" width="16" height="16" viewBox="0 0 16 16"><path d="M1,8 L4,4 H15 V12 H4Z" fill="#f3dc4c" stroke="#a08a20" stroke-width="0.6"/><text x="4.5" y="10.5" font-size="6" font-family="Liberation Sans" fill="#222">abc</text></svg>
<svg class="a" style="left:642.8px;top:69.0px;" width="16" height="16" viewBox="0 0 16 16"><path d="M2,6 L7,3 L12,6 V11 L7,14 L2,11Z" fill="#5a9a4a"/><path d="M7,3 L12,6 V11 L7,8Z" fill="#c83a3a"/><rect x="8" y="10" width="3" height="6" fill="#5a9a4a"/><rect x="11" y="11" width="4" height="5" fill="#c83a3a"/><rect x="5" y="12" width="3" height="4" fill="#f2cf4a"/></svg>
<div class="a" style="left:665.8px;top:69.0px;width:1px;height:16px;background:#cfcfd2"></div>
<svg class="a" style="left:670.3px;top:69.0px;" width="16" height="16" viewBox="0 0 16 16"><path d="M1,7 L4,3 H14 V11 H4Z" fill="#e6eef8" stroke="#5a8ac6" stroke-width="0.8"/><text x="4.5" y="9.5" font-size="6" fill="#333" font-family="Liberation Sans">abc</text><circle cx="12" cy="13" r="2.5" fill="#c82a2a"/></svg>
<svg class="a" style="left:693.7px;top:69.0px;" width="16" height="16" viewBox="0 0 16 16"><path d="M1,8 L4,4 H15 V12 H4Z" fill="#fbe5e5" stroke="#d04040" stroke-width="0.8"/><text x="4.5" y="10.5" font-size="6" fill="#c02020" font-family="Liberation Sans">abc</text></svg>
<div class="a" style="left:717.5px;top:69.0px;width:1px;height:16px;background:#cfcfd2"></div>
<svg class="a" style="left:722.8px;top:69.0px;opacity:0.55;filter:grayscale(1);" width="16" height="16" viewBox="0 0 16 16"><path d="M1,7 L4,3 H14 V11 H4Z" fill="#eee" stroke="#bbb" stroke-width="0.8"/><text x="4.5" y="9.5" font-size="6" fill="#bbb" font-family="Liberation Sans">abc</text><rect x="9" y="10" width="6" height="6" rx="1" fill="#ccc"/></svg>
<svg class="a" style="left:745.3px;top:69.0px;opacity:0.55;filter:grayscale(1);" width="16" height="16" viewBox="0 0 16 16"><path d="M1,7 L4,3 H14 V11 H4Z" fill="#eee" stroke="#bbb" stroke-width="0.8"/><text x="4.5" y="9.5" font-size="6" fill="#bbb" font-family="Liberation Sans">abc</text><rect x="9" y="10" width="6" height="6" rx="1" fill="#ccc"/></svg>
<svg class="a" style="left:770.3px;top:69.0px;opacity:0.55;filter:grayscale(1);" width="16" height="16" viewBox="0 0 16 16"><path d="M1,7 L4,3 H14 V11 H4Z" fill="#eee" stroke="#bbb" stroke-width="0.8"/><text x="4.5" y="9.5" font-size="6" fill="#bbb" font-family="Liberation Sans">abc</text><rect x="9" y="10" width="6" height="6" rx="1" fill="#ccc"/></svg>
<svg class="a" style="left:792.8px;top:69.0px;opacity:0.55;filter:grayscale(1);" width="16" height="16" viewBox="0 0 16 16"><path d="M1,7 L4,3 H14 V11 H4Z" fill="#eee" stroke="#bbb" stroke-width="0.8"/><text x="4.5" y="9.5" font-size="6" fill="#bbb" font-family="Liberation Sans">abc</text><rect x="9" y="10" width="6" height="6" rx="1" fill="#ccc"/></svg>
<svg class="a" style="left:816.2px;top:69.0px;opacity:0.55;filter:grayscale(1);" width="16" height="16" viewBox="0 0 16 16"><path d="M1,7 L4,3 H14 V11 H4Z" fill="#eee" stroke="#bbb" stroke-width="0.8"/><text x="4.5" y="9.5" font-size="6" fill="#bbb" font-family="Liberation Sans">abc</text><rect x="9" y="10" width="6" height="6" rx="1" fill="#ccc"/></svg>
<svg class="a" style="left:851.2px;top:69.0px;" width="16" height="16" viewBox="0 0 16 16"><circle cx="8" cy="7" r="6.5" fill="#8fb0d8" stroke="#4a6fa0" stroke-width="0.8"/><path d="M3,5 q3,2 5,-1 q2,3 5,1 M4,10 q4,-2 8,0" fill="none" stroke="#e8eef6" stroke-width="1"/><circle cx="5" cy="13" r="2.5" fill="#111"/><circle cx="11" cy="13" r="2.5" fill="#111"/></svg>
<svg class="a" style="left:876.8px;top:70.0px" width="3" height="14" viewBox="0 0 3 14"><path d="M0.5,0 V14 M2.5,1 V14" stroke="#b5b5b8" stroke-width="0.8" stroke-dasharray="0.8 1.2"/></svg>
<svg class="a" style="left:886.2px;top:69.0px;" width="16" height="16" viewBox="0 0 16 16"><path d="M8,1 H5 Q2,1 2,4 V8 H8 V9 H3 Q1,9 1,12 Q1,15 4,15 H7 V11 H10 Q13,11 13,8 V4 Q13,1 10,1Z" fill="#3f73b0"/><path d="M8,15 H11 Q14,15 14,12 V8 H8 V7 H13 Q15,7 15,4" fill="#f0cc3a"/><rect x="7" y="7" width="8" height="8" rx="2" fill="#f0cc3a"/></svg>
<svg class="a" style="left:911.0px;top:70.0px" width="3" height="14" viewBox="0 0 3 14"><path d="M0.5,0 V14 M2.5,1 V14" stroke="#b5b5b8" stroke-width="0.8" stroke-dasharray="0.8 1.2"/></svg>
<svg class="a" style="left:921.2px;top:69.0px;" width="16" height="16" viewBox="0 0 16 16"><rect x="2" y="1" width="12" height="14" fill="#5b8cc6" stroke="#222" stroke-width="1"/><rect x="2" y="1" width="2" height="14" fill="#222"/><text x="6" y="12" font-size="10" fill="#fff" font-family="Liberation Sans">?</text></svg>
<svg class="a" style="left:946.8px;top:70.0px" width="3" height="14" viewBox="0 0 3 14"><path d="M0.5,0 V14 M2.5,1 V14" stroke="#b5b5b8" stroke-width="0.8" stroke-dasharray="0.8 1.2"/></svg>
<svg class="a" style="left:957.9px;top:70.0px" width="3" height="14" viewBox="0 0 3 14"><path d="M0.5,0 V14 M2.5,1 V14" stroke="#b5b5b8" stroke-width="0.8" stroke-dasharray="0.8 1.2"/></svg>
<svg class="a" style="left:967.0px;top:69.0px;" width="16" height="16" viewBox="0 0 16 16"><text x="0" y="12" font-size="12" font-weight="bold" fill="#3a64a0" font-family="Liberation Serif">A</text><path d="M1,2 H6" stroke="#333" stroke-width="0.7"/><path d="M10,1 L12,4" stroke="#3a64a0" stroke-width="1"/><rect x="9" y="9" width="7" height="7" rx="1" fill="#e9c73c" stroke="#b39027" stroke-width="0.6"/><path d="M12.5,10.3 v4.4 M10.3,12.5 h4.4 M11,11 l3,3 M14,11 l-3,3" stroke="#fff" stroke-width="0.7"/></svg>
<svg class="a" style="left:988.7px;top:75px" width="6" height="4" viewBox="0 0 6 4"><path d="M0,0 H6 L3,3.5Z" fill="#555"/></svg>
<svg class="a" style="left:998.3px;top:69.0px;" width="16" height="16" viewBox="0 0 16 16"><path d="M1,1 H10 V10 H1Z" fill="none" stroke="#333" stroke-width="0.8" stroke-dasharray="1 1"/><path d="M5,4 L5,15 L8,12 L10,16 L12,15 L10,11.5 L14,11Z" fill="#fff" stroke="#222" stroke-width="0.8"/></svg>
<svg class="a" style="left:1023.3px;top:69.0px;" width="16" height="16" viewBox="0 0 16 16"><path d="M2,2 H13 L8,13 L3,12Z" fill="none" stroke="#333" stroke-width="0.9"/><circle cx="2" cy="2" r="1.6" fill="#3a7ad6"/><circle cx="13" cy="2" r="1.6" fill="#3a7ad6"/><circle cx="3" cy="12" r="1.6" fill="#3a7ad6"/><rect x="9" y="9" width="7" height="7" rx="1.5" fill="#5e9b5e"/><path d="M12.5,10.3 v4.4 M10.3,12.5 h4.4" stroke="#fff" stroke-width="1.4"/></svg>
<svg class="a" style="left:1047.2px;top:69.0px;" width="16" height="16" viewBox="0 0 16 16"><path d="M3,2 H13 M3,2 L1,8 L4,13" fill="none" stroke="#333" stroke-width="0.9"/><circle cx="3" cy="2" r="1.6" fill="#3a7ad6"/><circle cx="13" cy="2" r="1.6" fill="#3a7ad6"/><circle cx="4" cy="13" r="1.6" fill="#3a7ad6"/><rect x="9" y="9" width="7" height="7" rx="1.5" fill="#5e9b5e"/><path d="M11,11.5 h3 v2.5 h-2.5" fill="none" stroke="#fff" stroke-width="1.1"/></svg>
<svg class="a" style="left:1070.0px;top:69.0px;" width="16" height="16" viewBox="0 0 16 16"><path d="M7,1 L9,6 L14,6 L10,9 L11.5,14 L7,11 L2.5,14 L4,9 L0,6 L5,6Z" fill="#f3dc8a" stroke="#c9a845" stroke-width="0.6"/><rect x="9" y="9" width="7" height="7" rx="1.5" fill="#5e9b5e"/><path d="M12.5,10.3 v4.4 M10.3,12.5 h4.4" stroke="#fff" stroke-width="1.4"/></svg>
<svg class="a" style="left:1094.0px;top:69.0px;" width="16" height="16" viewBox="0 0 16 16"><text x="3" y="9" font-size="10" fill="#222" font-family="Liberation Serif">T</text><rect x="1" y="11" width="1.5" height="1.5" fill="#555"/><rect x="5" y="1" width="1" height="1" fill="#555"/><rect x="9" y="9" width="7" height="7" rx="1.5" fill="#5e9b5e"/><path d="M11,11.5 h3 v2.5 h-2.5" fill="none" stroke="#fff" stroke-width="1.1"/></svg>
<div class="a" style="left:1116.7px;top:69.0px;width:1px;height:16px;background:#cfcfd2"></div>
<svg class="a" style="left:1121.2px;top:69.0px;" width="16" height="16" viewBox="0 0 16 16"><rect x="1.5" y="1.5" width="13" height="10" fill="#fafafa" stroke="#777" stroke-width="0.8"/><text x="5" y="9" font-size="8" fill="#222" font-family="Liberation Serif">1</text><path d="M3,12 L1,15" stroke="#777" stroke-width="0.8"/></svg>
<svg class="a" style="left:1141.8px;top:75px" width="6" height="4" viewBox="0 0 6 4"><path d="M0,0 H6 L3,3.5Z" fill="#555"/></svg>
<svg class="a" style="left:1155.8px;top:70.0px" width="3" height="14" viewBox="0 0 3 14"><path d="M0.5,0 V14 M2.5,1 V14" stroke="#b5b5b8" stroke-width="0.8" stroke-dasharray="0.8 1.2"/></svg>
<svg class="a" style="left:1163.9px;top:69.0px;" width="16" height="16" viewBox="0 0 16 16"><path d="M3,6 A5,5 0 1 0 12,5" fill="none" stroke="#c01818" stroke-width="3.5"/><path d="M9,2 L13,3 L11,6Z" fill="#c01818"/><rect x="1" y="5" width="4" height="2.5" fill="#eee"/></svg>
<div class="t" style="left:1186px;top:71px;font-size:11px;color:#333">»</div>
<div class="a" style="left:1px;top:90px;width:35px;height:562px;background:linear-gradient(90deg,#f8f6f8,#e9e8eb)"></div>
<div class="a" style="left:36px;top:90px;width:1px;height:562px;background:#c9c8cb"></div>
<svg class="a" style="left:16.5px;top:94.5px" width="3" height="3" viewBox="0 0 3 3"><path d="M0.5,0 V3 M2.5,1 V3" stroke="#b5b5b8" stroke-width="0.8" stroke-dasharray="0.8 1.2"/></svg>
<svg class="a" style="left:10.7px;top:103.0px;" width="17" height="17" viewBox="0 0 16 16"><path d="M1,15 L1,2 L13,15Z" fill="#f07a5a" stroke="#8a3a20" stroke-width="0.8"/><path d="M4,12.5 L4,8.5 L8,12.5Z" fill="#fff" stroke="#8a3a20" stroke-width="0.5"/><path d="M11,1 H15 V15 H11Z" fill="#f2cf4a" stroke="#8a7020" stroke-width="0.6"/><path d="M11,4 h2 M11,7 h2 M11,10 h2" stroke="#8a7020" stroke-width="0.5"/></svg>
<svg class="a" style="left:6.5px;top:124.9px;" width="17" height="17" viewBox="0 0 16 16"><path d="M2,14 L13,3" stroke="#ccc" stroke-width="0.8"/><circle cx="2" cy="14" r="1.3" fill="none" stroke="#ccc"/><circle cx="13" cy="3" r="1.3" fill="none" stroke="#ccc"/></svg>
<svg class="a" style="left:7.0px;top:148.0px;" width="17" height="17" viewBox="0 0 16 16"><path d="M1,4 Q3,0 8,1.5 Q14,1 15,5 Q15,9 10,8.5 Q5,10 1,4Z" fill="#78aa78" stroke="#4a7a4a" stroke-width="0.5"/><rect x="8" y="9" width="7.5" height="7" rx="0.5" fill="#2f5a8a"/><path d="M11.75,10.3 v4.4 M9.5,12.5 h4.5" stroke="#fff" stroke-width="1.3"/></svg>
<svg class="a" style="left:10.5px;top:170.5px;" width="17" height="17" viewBox="0 0 16 16"><path d="M1,4 Q3,0 8,1.5 Q14,1 15,5 Q15,9 10,8.5 Q5,10 1,4Z" fill="#78aa78" stroke="#4a7a4a" stroke-width="0.5"/><rect x="9" y="9" width="7" height="7" rx="1" fill="#2f5a8a"/><circle cx="12.5" cy="12.5" r="2" fill="none" stroke="#fff" stroke-width="1"/></svg>
<svg class="a" style="left:10.5px;top:193.5px;" width="17" height="17" viewBox="0 0 16 16"><path d="M1,4 Q3,0 8,1.5 Q14,1 15,5 Q15,9 10,8.5 Q5,10 1,4Z" fill="#78aa78" stroke="#4a7a4a" stroke-width="0.5"/><rect x="9" y="9" width="7" height="7" rx="1" fill="#2f5a8a"/><path d="M10,12.5 H15 M10,12.5 l1.5,-1.5 M10,12.5 l1.5,1.5 M15,12.5 l-1.5,-1.5 M15,12.5 l-1.5,1.5" stroke="#fff" stroke-width="0.9"/></svg>
<svg class="a" style="left:10.5px;top:215.8px;" width="17" height="17" viewBox="0 0 16 16"><circle cx="6" cy="6" r="5" fill="#78aa78" stroke="#4a7a4a" stroke-width="0.5"/><path d="M10,5 L14.5,7.5 V12.5 L10,15 L5.5,12.5 V7.5Z" fill="#9cc0e6" stroke="#4a7aa0" stroke-width="0.6"/></svg>
<svg class="a" style="left:10.5px;top:237.2px;" width="17" height="17" viewBox="0 0 16 16"><path d="M1,5 Q2,1 7,2 Q12,1 14,4 Q15,8 11,8 Q8,7 7,10 Q3,11 1,5Z" fill="#78aa78" stroke="#4a7a4a" stroke-width="0.6"/><ellipse cx="6" cy="5.5" rx="2.5" ry="1.3" fill="#fff" stroke="#4a7a4a" stroke-width="0.4"/><rect x="9" y="9" width="7" height="7" rx="1" fill="#e9c73c" stroke="#b39027" stroke-width="0.6"/><path d="M12.5,10.3 v4.4 M10.3,12.5 h4.4 M11,11 l3,3 M14,11 l-3,3" stroke="#fff" stroke-width="0.7"/></svg>
<svg class="a" style="left:10.5px;top:260.5px;" width="17" height="17" viewBox="0 0 16 16"><path d="M2,5 Q3,1 8,2 Q13,1 14,5 Q14,9 10,9 Q7,9 6,7 Q3,8 2,5Z" fill="#a8a8a8" stroke="#666" stroke-width="0.5"/><path d="M1,14 Q1,9 5,9 Q7,11 5,14Z" fill="#78aa78"/><rect x="9" y="9" width="7" height="7" rx="1" fill="#e9c73c" stroke="#b39027" stroke-width="0.6"/><path d="M12.5,10.3 v4.4 M10.3,12.5 h4.4 M11,11 l3,3 M14,11 l-3,3" stroke="#fff" stroke-width="0.7"/></svg>
<svg class="a" style="left:10.5px;top:283.5px;" width="17" height="17" viewBox="0 0 16 16"><path d="M1,5 Q2,1 7,2 Q12,1 14,4 Q15,8 11,8 Q8,7 7,10 Q3,11 1,5Z" fill="#78aa78" stroke="#4a7a4a" stroke-width="0.6"/><ellipse cx="6" cy="5.5" rx="2.5" ry="1.3" fill="#fff" stroke="#4a7a4a" stroke-width="0.4"/><rect x="9" y="9" width="7" height="7" rx="1" fill="#e9c73c" stroke="#b39027" stroke-width="0.6"/><path d="M12.5,10.3 v4.4 M10.3,12.5 h4.4 M11,11 l3,3 M14,11 l-3,3" stroke="#fff" stroke-width="0.7"/></svg>
<svg class="a" style="left:10.5px;top:306.0px;" width="17" height="17" viewBox="0 0 16 16"><path d="M1,5 Q2,1 7,2 Q12,1 14,4 Q15,8 11,8 Q8,7 7,10 Q3,11 1,5Z" fill="#78aa78" stroke="#4a7a4a" stroke-width="0.6"/><ellipse cx="6" cy="5.5" rx="2.5" ry="1.3" fill="#fff" stroke="#4a7a4a" stroke-width="0.4"/><rect x="9" y="9" width="7" height="7" rx="1" fill="#e05a7a"/><path d="M10.5,10.5 l4,4 M14.5,10.5 l-4,4" stroke="#fff" stroke-width="1.1"/></svg>
<svg class="a" style="left:10.5px;top:329.9px;" width="17" height="17" viewBox="0 0 16 16"><path d="M2,5 Q3,1 8,2 Q13,1 14,5 Q14,9 10,9 Q7,9 6,7 Q3,8 2,5Z" fill="#a8a8a8" stroke="#666" stroke-width="0.5"/><path d="M1,14 Q1,9 5,9 Q7,11 5,14Z" fill="#78aa78"/><rect x="9" y="9" width="7" height="7" rx="1" fill="#e05a7a"/><path d="M10.5,10.5 l4,4 M14.5,10.5 l-4,4" stroke="#fff" stroke-width="1.1"/></svg>
<svg class="a" style="left:10.5px;top:351.3px;" width="17" height="17" viewBox="0 0 16 16"><path d="M1,3 Q2,1 6,1.5 L14,2 Q15,5 14,7 L8,8 L7,14 Q4,15 2,14Z" fill="#78aa78" stroke="#d8c030" stroke-width="1" stroke-dasharray="1.2 0.8"/></svg>
<svg class="a" style="left:10.5px;top:371.9px;" width="17" height="17" viewBox="0 0 16 16"><path d="M2,13 Q0,9 4,7 L10,2 Q14,1 15,4 Q15,7 12,9 L6,14 Q3,15 2,13Z" fill="#78aa78" stroke="#d8c030" stroke-width="1.2" stroke-dasharray="1.2 0.8"/></svg>
<svg class="a" style="left:10.5px;top:395.1px;" width="17" height="17" viewBox="0 0 16 16"><path d="M1,2 L5,10 L9,2" fill="none" stroke="#ccc" stroke-width="0.9"/><path d="M9,2 H15" stroke="#ccc" stroke-dasharray="1 1"/><rect x="9" y="9" width="6" height="6" fill="none" stroke="#ccc"/></svg>
<svg class="a" style="left:10.5px;top:420.1px;" width="17" height="17" viewBox="0 0 16 16"><path d="M8,1 V15 M1,9 H15" stroke="#88a888" stroke-width="1.2"/><rect x="1" y="10" width="5" height="4" fill="#fff" stroke="#e04a6a" stroke-width="1"/><rect x="10" y="1" width="5" height="5" fill="#f2cf4a" stroke="#b39027" stroke-width="0.6"/><circle cx="8" cy="9" r="1.8" fill="#999"/></svg>
<svg class="a" style="left:10.5px;top:442.2px;" width="17" height="17" viewBox="0 0 16 16"><circle cx="5" cy="5" r="4.2" fill="#a0a0a0"/><circle cx="11" cy="5" r="4.2" fill="#78aa78"/><path d="M6,6 L9,12 M10,6 L7,12" stroke="#888" stroke-width="1"/><circle cx="6" cy="13" r="1.8" fill="none" stroke="#c01818" stroke-width="1.2"/><circle cx="11" cy="13" r="1.8" fill="none" stroke="#c01818" stroke-width="1.2"/></svg>
<svg class="a" style="left:10.5px;top:464.5px;" width="17" height="17" viewBox="0 0 16 16"><circle cx="5" cy="5" r="4.2" fill="#78aa78"/><circle cx="11" cy="5" r="4.2" fill="#78aa78"/><path d="M6,6 L9,12 M10,6 L7,12" stroke="#888" stroke-width="1"/><circle cx="6" cy="13" r="1.8" fill="none" stroke="#c01818" stroke-width="1.2"/><circle cx="11" cy="13" r="1.8" fill="none" stroke="#c01818" stroke-width="1.2"/></svg>
<svg class="a" style="left:10.5px;top:486.9px;" width="17" height="17" viewBox="0 0 16 16"><circle cx="5" cy="5" r="4" fill="#d0d0d0"/><circle cx="11" cy="5" r="4" fill="#d0d0d0"/><path d="M4,9 Q5,13 9,14" fill="none" stroke="#c8c8c8" stroke-width="1"/></svg>
<svg class="a" style="left:10.5px;top:510.1px;" width="17" height="17" viewBox="0 0 16 16"><path d="M2,4 H14 M2,8 H14 M2,12 H14" stroke="#c8c8c8" stroke-width="1"/><path d="M7,2 q2,2 0,4 q-2,2 0,4 q2,2 0,4" fill="none" stroke="#c8c8c8" stroke-width="1"/></svg>
<svg class="a" style="left:7.0px;top:533.3px;" width="17" height="17" viewBox="0 0 16 16"><path d="M8,8 V2 A6,6 0 1 0 14,8Z" fill="none" stroke="#c8c8c8" stroke-width="1"/><path d="M9,1 L15,4 L9,7Z" fill="#c8c8c8"/></svg>
<svg class="a" style="left:27.7px;top:131px" width="6" height="4" viewBox="0 0 6 4"><path d="M0,0 H6 L3,3.5Z" fill="#bbb"/></svg>
<svg class="a" style="left:27.7px;top:154.3px" width="6" height="4" viewBox="0 0 6 4"><path d="M0,0 H6 L3,3.5Z" fill="#555"/></svg>
<svg class="a" style="left:27.5px;top:540px" width="6" height="4" viewBox="0 0 6 4"><path d="M0,0 H6 L3,3.5Z" fill="#bbb"/></svg>
<div class="t" style="left:40px;top:92px;font-size:9.5px">Browser</div>
<svg class="a" style="left:226.5px;top:94.0px;" width="9" height="9" viewBox="0 0 16 16"><rect x="1" y="1" width="14" height="14" rx="3" fill="none" stroke="#666" stroke-width="1.8"/><path d="M4.5,11.5 L11,5 M11,5 V9.5 M11,5 H6.5" fill="none" stroke="#555" stroke-width="1.5"/></svg>
<svg class="a" style="left:236.5px;top:94.0px;" width="9" height="9" viewBox="0 0 16 16"><rect x="1" y="1" width="14" height="14" rx="3" fill="none" stroke="#666" stroke-width="1.8"/><path d="M4.5,4.5 L11.5,11.5 M11.5,4.5 L4.5,11.5" stroke="#444" stroke-width="1.8"/></svg>
<svg class="a" style="left:42.95px;top:109.25px;" width="11.5" height="11.5" viewBox="0 0 16 16"><path d="M13,2 H2 V14 H9" fill="none" stroke="#777" stroke-width="1.3"/><path d="M9,14 H14 V10 H11" fill="none" stroke="#4a9a4a" stroke-width="1.4"/></svg>
<svg class="a" style="left:61.05px;top:109.25px;" width="11.5" height="11.5" viewBox="0 0 16 16"><path d="M2,8 A6,6 0 0 1 13,4.5" fill="none" stroke="#4a86c8" stroke-width="3.4"/><path d="M14,8 A6,6 0 0 1 3,11.5" fill="none" stroke="#4a86c8" stroke-width="3.4"/><path d="M10,0 L16,2 L13,7Z M6,16 L0,14 L3,9Z" fill="#4a86c8"/></svg>
<svg class="a" style="left:78.25px;top:109.25px;" width="11.5" height="11.5" viewBox="0 0 16 16"><path d="M0.5,3 H15.5 L10,9 V16 L6,14 V9Z" fill="#5a7fae"/><rect x="0.5" y="1" width="15" height="2" fill="#f3e04a"/></svg>
<svg class="a" style="left:96.65px;top:109.25px;" width="11.5" height="11.5" viewBox="0 0 16 16"><path d="M1,2 H7 M2,2 V15" stroke="#888" stroke-width="1.3"/><circle cx="4.5" cy="7" r="1" fill="#e0a030"/><circle cx="4.5" cy="12" r="1" fill="#e0a030"/><path d="M8,4 H16 M12,2 V15" stroke="#2f4f7a" stroke-width="2"/><path d="M10,6 L12,3 L14,6Z" fill="#2f4f7a"/></svg>
<svg class="a" style="left:113.95px;top:109.25px;" width="11.5" height="11.5" viewBox="0 0 16 16"><circle cx="8" cy="8" r="7" fill="#5a86b8"/><path d="M8,6.5 L7,12" stroke="#cfe0f2" stroke-width="1.5"/><circle cx="8.5" cy="4.5" r="1" fill="#cfe0f2"/></svg>
<div class="a" style="left:37px;top:127px;width:209px;height:290px;background:#fff;border:1px solid #b9b8bb;border-bottom:none"></div>
<div class="a" style="left:39px;top:267.5px;width:183px;height:13.5px;background:#efeef2"></div>
<svg class="a" style="left:51.5px;top:128.5px;" width="11" height="11" viewBox="0 0 16 16"><path d="M8,1 L10,6 L15,6 L11,9.5 L12.5,15 L8,11.5 L3.5,15 L5,9.5 L1,6 L6,6Z" fill="#f5e04a" stroke="#d4b830" stroke-width="0.6"/></svg>
<div class="t" style="left:67.5px;top:128px;letter-spacing:-0.45px;color:#1e1e22">Favorites</div>
<svg class="a" style="left:42.5px;top:144.5px" width="4" height="5" viewBox="0 0 4 5"><path d="M0,0 V5 L3,2.5Z" fill="#5a5a5a"/></svg>
<svg class="a" style="left:51.5px;top:141.5px;" width="11" height="11" viewBox="0 0 16 16"><path d="M3,2 H13 V15 H4 Q2,15 2,13 V3Z" fill="#e8e8ea" stroke="#999" stroke-width="0.8"/><path d="M9,2 V7 L10.5,6 L12,7 V2" fill="#5a8ac6"/></svg>
<div class="t" style="left:67.5px;top:141px;letter-spacing:-0.45px;color:#1e1e22">Spatial Bookmarks</div>
<svg class="a" style="left:42.5px;top:157.5px" width="4" height="5" viewBox="0 0 4 5"><path d="M0,0 V5 L3,2.5Z" fill="#5a5a5a"/></svg>
<svg class="a" style="left:51.5px;top:154.5px;" width="11" height="11" viewBox="0 0 16 16"><path d="M2,2 H8 V15 H2Z" fill="none" stroke="#777" stroke-width="0.9"/><path d="M7,9 L10.5,6 L14,9 V14 H7Z" fill="#fff" stroke="#555" stroke-width="0.9"/></svg>
<div class="t" style="left:67.5px;top:154px;letter-spacing:-0.45px;color:#1e1e22">Home</div>
<svg class="a" style="left:42.5px;top:170.2px" width="4" height="5" viewBox="0 0 4 5"><path d="M0,0 V5 L3,2.5Z" fill="#5a5a5a"/></svg>
<svg class="a" style="left:51.5px;top:167.2px;" width="11" height="11" viewBox="0 0 16 16"><path d="M1.5,2.5 H6 L7.5,4 H14.5 V14.5 H1.5Z" fill="#f4f4f4" stroke="#999" stroke-width="0.8"/></svg>
<div class="t" style="left:67.5px;top:166.7px;letter-spacing:-0.45px;color:#1e1e22">C:\</div>
<svg class="a" style="left:42.5px;top:182.6px" width="4" height="5" viewBox="0 0 4 5"><path d="M0,0 V5 L3,2.5Z" fill="#5a5a5a"/></svg>
<svg class="a" style="left:51.5px;top:179.6px;" width="11" height="11" viewBox="0 0 16 16"><path d="M1.5,2.5 H6 L7.5,4 H14.5 V14.5 H1.5Z" fill="#f4f4f4" stroke="#999" stroke-width="0.8"/></svg>
<div class="t" style="left:67.5px;top:179.1px;letter-spacing:-0.45px;color:#1e1e22">D:\ (Volume)</div>
<svg class="a" style="left:42.5px;top:196.0px" width="4" height="5" viewBox="0 0 4 5"><path d="M0,0 V5 L3,2.5Z" fill="#5a5a5a"/></svg>
<svg class="a" style="left:51.5px;top:193.0px;" width="11" height="11" viewBox="0 0 16 16"><path d="M1.5,2.5 H6 L7.5,4 H14.5 V14.5 H1.5Z" fill="#f4f4f4" stroke="#999" stroke-width="0.8"/></svg>
<div class="t" style="left:67.5px;top:192.5px;letter-spacing:-0.45px;color:#1e1e22">G:\ (Google Drive)</div>
<svg class="a" style="left:41.0px;top:209.5px" width="6" height="4" viewBox="0 0 6 4"><path d="M0,0 H6 L3,3.5Z" fill="#444"/></svg>
<svg class="a" style="left:51.5px;top:206.0px;" width="11" height="11" viewBox="0 0 16 16"><path d="M1,7 L8,4 L15,7 V13 L8,16 L1,13Z" fill="#e9c53a" stroke="#a88a20" stroke-width="0.6"/><circle cx="8" cy="6" r="4.5" fill="#5f8cc6" stroke="#2e5c96" stroke-width="0.6"/><path d="M5,5 q2,1 3,-1 q2,2 3,0" stroke="#dfe8f4" fill="none" stroke-width="0.8"/></svg>
<div class="t" style="left:67.5px;top:205.5px;letter-spacing:-0.45px;color:#1e1e22">GeoPackage</div>
<svg class="a" style="left:52.5px;top:221.7px" width="6" height="4" viewBox="0 0 6 4"><path d="M0,0 H6 L3,3.5Z" fill="#444"/></svg>
<svg class="a" style="left:63.5px;top:218.2px;" width="11" height="11" viewBox="0 0 16 16"><ellipse cx="8" cy="3.5" rx="5" ry="2" fill="#eee" stroke="#888" stroke-width="0.8"/><path d="M3,3.5 V13 Q8,16 13,13 V3.5 M3,7 Q8,10 13,7 M3,10 Q8,13 13,10" fill="none" stroke="#888" stroke-width="0.8"/></svg>
<div class="t" style="left:78px;top:217.7px;letter-spacing:-0.45px;color:#1e1e22">limiti_admin_STAT_2021_WGS84.gpkg</div>
<svg class="a" style="left:74.5px;top:231.0px;" width="11" height="11" viewBox="0 0 16 16"><circle cx="7.5" cy="7.5" r="5" fill="none" stroke="#6aae3e" stroke-width="2.6"/><path d="M9,9 L14,14" stroke="#6aae3e" stroke-width="2.6"/><circle cx="7.5" cy="7.5" r="1.8" fill="#e8a030"/></svg>
<div class="t" style="left:90.5px;top:230.5px;letter-spacing:-0.45px;color:#1e1e22">colori_grafici</div>
<svg class="a" style="left:64.5px;top:246.8px" width="4" height="5" viewBox="0 0 4 5"><path d="M0,0 V5 L3,2.5Z" fill="#5a5a5a"/></svg>
<svg class="a" style="left:74.0px;top:243.3px;" width="12" height="12" viewBox="0 0 16 16"><path d="M1,7 Q1,3 4.5,3.5 Q7,4.5 9.5,3.5 Q15,2.5 15,7 Q15,11 11.5,10.5 Q9,9.5 6.5,10.5 Q1,11.5 1,7Z" fill="#f2f2f2" stroke="#8a8a8a" stroke-width="1.1"/></svg>
<div class="t" style="left:90.5px;top:243.3px;letter-spacing:-0.45px;color:#1e1e22">Com01012021_WGS84</div>
<svg class="a" style="left:64.5px;top:259.1px" width="4" height="5" viewBox="0 0 4 5"><path d="M0,0 V5 L3,2.5Z" fill="#5a5a5a"/></svg>
<svg class="a" style="left:74.0px;top:255.60000000000002px;" width="12" height="12" viewBox="0 0 16 16"><path d="M1,7 Q1,3 4.5,3.5 Q7,4.5 9.5,3.5 Q15,2.5 15,7 Q15,11 11.5,10.5 Q9,9.5 6.5,10.5 Q1,11.5 1,7Z" fill="#f2f2f2" stroke="#8a8a8a" stroke-width="1.1"/></svg>
<div class="t" style="left:90.5px;top:255.60000000000002px;letter-spacing:-0.45px;color:#1e1e22">ProvCM01012021_WGS84</div>
<svg class="a" style="left:64.5px;top:272.0px" width="4" height="5" viewBox="0 0 4 5"><path d="M0,0 V5 L3,2.5Z" fill="#5a5a5a"/></svg>
<svg class="a" style="left:74.0px;top:268.5px;" width="12" height="12" viewBox="0 0 16 16"><path d="M1,7 Q1,3 4.5,3.5 Q7,4.5 9.5,3.5 Q15,2.5 15,7 Q15,11 11.5,10.5 Q9,9.5 6.5,10.5 Q1,11.5 1,7Z" fill="#f2f2f2" stroke="#8a8a8a" stroke-width="1.1"/></svg>
<div class="t" style="left:90.5px;top:268.5px;letter-spacing:-0.45px;color:#1e1e22">Reg01012021_WGS84</div>
<svg class="a" style="left:64.5px;top:284.7px" width="4" height="5" viewBox="0 0 4 5"><path d="M0,0 V5 L3,2.5Z" fill="#5a5a5a"/></svg>
<svg class="a" style="left:74.0px;top:281.2px;" width="12" height="12" viewBox="0 0 16 16"><path d="M1,7 Q1,3 4.5,3.5 Q7,4.5 9.5,3.5 Q15,2.5 15,7 Q15,11 11.5,10.5 Q9,9.5 6.5,10.5 Q1,11.5 1,7Z" fill="#f2f2f2" stroke="#8a8a8a" stroke-width="1.1"/></svg>
<div class="t" style="left:90.5px;top:281.2px;letter-spacing:-0.45px;color:#1e1e22">RipGeo01012021_WGS84</div>
<svg class="a" style="left:51.5px;top:294.2px;" width="11" height="11" viewBox="0 0 16 16"><path d="M1,15 Q3,6 14,1 Q13,9 4,12Z" fill="#7c97bd" stroke="#4a6a98" stroke-width="0.6"/></svg>
<div class="t" style="left:67.5px;top:293.7px;letter-spacing:-0.45px;color:#1e1e22">SpatiaLite</div>
<svg class="a" style="left:51.5px;top:307.1px;" width="11" height="11" viewBox="0 0 16 16"><path d="M2,2 Q8,0 14,2 V8 Q12,10 10,9 V14 H7 V9 Q3,9 2,6Z" fill="#5f8cc6" stroke="#2e5c96" stroke-width="0.7"/></svg>
<div class="t" style="left:67.5px;top:306.6px;letter-spacing:-0.45px;color:#1e1e22">PostgreSQL</div>
<svg class="a" style="left:51.5px;top:320.3px;" width="11" height="11" viewBox="0 0 16 16"><rect x="3" y="3" width="10" height="10" fill="#6f9ad0"/><rect x="1.5" y="1.5" width="13" height="13" fill="none" stroke="#6f9ad0" stroke-width="1" stroke-dasharray="1 1"/></svg>
<div class="t" style="left:67.5px;top:319.8px;letter-spacing:-0.45px;color:#1e1e22">SAP HANA</div>
<svg class="a" style="left:51.5px;top:332.8px;" width="11" height="11" viewBox="0 0 16 16"><path d="M1,2 L14,5 L9,9 L14,13 L1,15 L4,8Z" fill="#5f8cc6" stroke="#2e5c96" stroke-width="0.6"/></svg>
<div class="t" style="left:67.5px;top:332.3px;letter-spacing:-0.45px;color:#1e1e22">MS SQL Server</div>
<svg class="a" style="left:51.5px;top:345.7px;" width="11" height="11" viewBox="0 0 16 16"><rect x="1" y="3" width="14" height="10" rx="5" fill="#6f9ad0" stroke="#2e5c96" stroke-width="0.8"/></svg>
<div class="t" style="left:67.5px;top:345.2px;letter-spacing:-0.45px;color:#1e1e22">Oracle</div>
<svg class="a" style="left:51.5px;top:358.5px;" width="11" height="11" viewBox="0 0 16 16"><circle cx="8" cy="8" r="6.5" fill="#8fb0d8" stroke="#4a6fa0" stroke-width="0.8"/><path d="M4,5 q3,2 4,-1 q2,3 5,1 M3,10 q4,-1 9,1" fill="none" stroke="#f0f4fa" stroke-width="1"/></svg>
<div class="t" style="left:67.5px;top:358px;letter-spacing:-0.45px;color:#1e1e22">WMS/WMTS</div>
<svg class="a" style="left:51.5px;top:371.3px;" width="11" height="11" viewBox="0 0 16 16"><rect x="1.5" y="1.5" width="13" height="13" fill="#5a5f6a"/><path d="M1.5,5.5 H14.5 M1.5,10 H14.5 M5.5,1.5 V14.5 M10,1.5 V14.5" stroke="#fff" stroke-width="1"/></svg>
<div class="t" style="left:67.5px;top:370.8px;letter-spacing:-0.45px;color:#1e1e22">Vector Tiles</div>
<svg class="a" style="left:42.5px;top:387.1px" width="4" height="5" viewBox="0 0 4 5"><path d="M0,0 V5 L3,2.5Z" fill="#5a5a5a"/></svg>
<svg class="a" style="left:51.5px;top:384.1px;" width="11" height="11" viewBox="0 0 16 16"><path d="M1,1 h4v4h-4z M6,1 h4v4h-4z M11,1 h4v4h-4z M1,6 h4v4h-4z M6,6 h4v4h-4z M11,6 h4v4h-4z M1,11 h4v4h-4z M6,11 h4v4h-4z M11,11 h4v4h-4z" fill="#7ea6d6"/></svg>
<div class="t" style="left:67.5px;top:383.6px;letter-spacing:-0.45px;color:#1e1e22">XYZ Tiles</div>
<svg class="a" style="left:51.5px;top:396.2px;" width="11" height="11" viewBox="0 0 16 16"><circle cx="8" cy="8" r="6.5" fill="#8fb0d8" stroke="#4a6fa0" stroke-width="0.8"/><path d="M2,6 H14 M2,10 H14" stroke="#f0f4fa" stroke-width="1.2"/></svg>
<div class="t" style="left:67.5px;top:395.7px;letter-spacing:-0.45px;color:#1e1e22">WCS</div>
<svg class="a" style="left:51.5px;top:409.1px;" width="11" height="11" viewBox="0 0 16 16"><circle cx="8" cy="8" r="6.5" fill="#e8eef6" stroke="#7a96bc" stroke-width="0.8"/><path d="M5,4 q2,3 0,7 M10,3 q-1,4 2,8" fill="none" stroke="#7a96bc" stroke-width="0.8"/></svg>
<div class="t" style="left:67.5px;top:408.6px;letter-spacing:-0.45px;color:#1e1e22">WFS / OGC API - Features</div>
<div class="a" style="left:37px;top:417px;width:211px;height:3px;background:#f0eef1"></div>
<div class="a" style="left:235px;top:128px;width:11px;height:289px;background:#f7f7f8;border-left:1px solid #c8c8c8;border-right:1px solid #c8c8c8"></div>
<div class="a" style="left:236px;top:374px;width:9px;height:33px;background:#dcdcde"></div>
<svg class="a" style="left:237.5px;top:130.5px" width="6" height="3" viewBox="0 0 6 3"><path d="M0,3 H6 L3,0Z" fill="#555"/></svg>
<svg class="a" style="left:237.5px;top:410px" width="6" height="3" viewBox="0 0 6 3"><path d="M0,0 H6 L3,3Z" fill="#555"/></svg>
<div class="t" style="left:40px;top:422px;font-size:9.5px">Layers</div>
<svg class="a" style="left:226.5px;top:424.0px;" width="9" height="9" viewBox="0 0 16 16"><rect x="1" y="1" width="14" height="14" rx="3" fill="none" stroke="#666" stroke-width="1.8"/><path d="M4.5,11.5 L11,5 M11,5 V9.5 M11,5 H6.5" fill="none" stroke="#555" stroke-width="1.5"/></svg>
<svg class="a" style="left:236.5px;top:424.0px;" width="9" height="9" viewBox="0 0 16 16"><rect x="1" y="1" width="14" height="14" rx="3" fill="none" stroke="#666" stroke-width="1.8"/><path d="M4.5,4.5 L11.5,11.5 M11.5,4.5 L4.5,11.5" stroke="#444" stroke-width="1.8"/></svg>
<div class="a" style="left:40px;top:437px;width:18px;height:18px;background:#dcdbde;border:1px solid #c4c3c6;border-radius:2px"></div>
<svg class="a" style="left:43.5px;top:440.5px;" width="11" height="11" viewBox="0 0 16 16"><path d="M2,14 L9,6" stroke="#c89030" stroke-width="2"/><path d="M8,7 L14,2 L15,4 L10,9Z" fill="#d05030"/><circle cx="4" cy="8" r="2.5" fill="#e8c040"/></svg>
<svg class="a" style="left:61.0px;top:440.5px;" width="11" height="11" viewBox="0 0 16 16"><rect x="3" y="2" width="8" height="12" fill="none" stroke="#666" stroke-width="1"/><path d="M1,8 H13 M7,2 V14" stroke="#666" stroke-width="0.8"/><rect x="10" y="10" width="5" height="5" fill="#e8c53a"/></svg>
<svg class="a" style="left:79.0px;top:440.5px;" width="11" height="11" viewBox="0 0 16 16"><ellipse cx="7" cy="8" rx="6" ry="3.5" fill="#e8eef6" stroke="#777" stroke-width="0.9"/><circle cx="7" cy="8" r="2" fill="#4f7fb8"/><path d="M12,12 H15" stroke="#555" stroke-width="1"/></svg>
<svg class="a" style="left:97.0px;top:440.5px;" width="11" height="11" viewBox="0 0 16 16"><path d="M1,2 H15 L9.5,8 V15 L6.5,13 V8Z" fill="#4f7fb8"/><rect x="1" y="1" width="14" height="2" fill="#f0d040"/><path d="M12,13 H15" stroke="#555"/></svg>
<svg class="a" style="left:115.5px;top:440.5px;" width="11" height="11" viewBox="0 0 16 16"><text x="0" y="11" font-size="10" font-family="Liberation Serif" fill="#555">ε</text><rect x="7" y="8" width="6" height="6" fill="#ddd" stroke="#888" stroke-width="0.6"/></svg>
<svg class="a" style="left:141.0px;top:440.5px;" width="11" height="11" viewBox="0 0 16 16"><path d="M2,2 H14 V14 H2Z" fill="#dfe6ef" stroke="#777" stroke-width="0.8"/><path d="M8,3 V12 M5,9 L8,12 L11,9" fill="none" stroke="#3f6fb0" stroke-width="1.4"/></svg>
<svg class="a" style="left:159.0px;top:440.5px;" width="11" height="11" viewBox="0 0 16 16"><path d="M3,3 H13 M3,3 V15 M8,1 V15 M8,6 H13" stroke="#555" stroke-width="1.3"/><path d="M4,8 l3,2 -3,2" fill="#e0a030"/></svg>
<svg class="a" style="left:176.5px;top:440.5px;" width="11" height="11" viewBox="0 0 16 16"><path d="M8,1 V10" stroke="#555" stroke-width="1"/><path d="M1,12 H6" stroke="#555" stroke-width="1"/><rect x="6" y="9.5" width="7" height="5" rx="2.5" fill="#fff" stroke="#d02040" stroke-width="1.5"/></svg>
<svg class="a" style="left:129px;top:444px" width="6" height="4" viewBox="0 0 6 4"><path d="M0,0 H6 L3,3.5Z" fill="#555"/></svg>
<div class="a" style="left:37px;top:457px;width:209px;height:195px;background:#fff;border:1px solid #b9b8bb;border-bottom:none"></div>
<div class="a" style="left:38px;top:458px;width:207px;height:12.5px;background:#efeef2"></div>
<div class="a" style="left:55px;top:459px;width:9px;height:9px;background:#fff;border:1px solid #777"></div>
<svg class="a" style="left:56px;top:460px" width="7" height="7" viewBox="0 0 7 7"><path d="M1,3.5 L3,6 L6.5,0.5" fill="none" stroke="#111" stroke-width="1.2"/></svg>
<div class="a" style="left:68px;top:458px;width:11px;height:11px;background:#f69d20;border:1px solid #c07010"></div>
<svg class="a" style="left:69px;top:459px" width="9" height="9" viewBox="0 0 9 9"><path d="M1,8 L8,1" stroke="#f3e090" stroke-width="1.3"/></svg>
<div class="t" style="left:84.5px;top:458.5px;font-weight:bold;letter-spacing:-0.5px;color:#111"><u>Reg01012021_WGS84</u></div>
<div class="a" style="left:250px;top:90px;width:588px;height:562px;background:#fff;border-left:1px solid #999"></div>
<div class="a" style="left:251px;top:91px;width:587px;height:22px;background:#c9425a;border-top:1px solid #8a2a3a"></div>
<svg class="a" style="left:250px;top:90px;" width="588" height="562" viewBox="0 0 588 562"><g transform="translate(-250,-90)"><g fill="#f69d20" stroke="#33230f" stroke-width="0.75"><path d="M342.6,191.9 L344.5,190.2 L347.1,189.7 L349.0,188.0 L351.1,188.0 L353.1,187.1 L355.1,187.1 L357.2,186.7 L359.3,186.6 L361.4,186.5 L363.3,185.3 L365.4,185.5 L367.8,186.3 L369.4,188.4 L371.7,189.3 L372.7,187.4 L374.2,185.7 L374.5,183.3 L376.0,181.7 L377.4,180.0 L378.0,177.8 L379.9,176.4 L380.5,174.2 L382.3,173.0 L383.1,170.8 L384.6,169.2 L386.5,168.2 L388.0,166.6 L388.5,168.7 L390.1,170.3 L391.2,172.1 L391.9,174.2 L393.5,175.7 L395.3,176.8 L396.6,178.5 L398.0,180.2 L399.4,181.8 L400.4,183.6 L401.7,185.2 L402.7,186.9 L403.8,188.7 L404.5,190.6 L405.3,188.5 L405.9,186.3 L407.0,184.3 L407.2,182.2 L408.9,180.7 L409.3,178.7 L410.2,176.8 L410.5,174.7 L412.1,173.2 L412.7,171.2 L412.7,169.0 L413.7,167.2 L414.6,165.4 L415.6,167.1 L416.9,168.7 L417.9,170.5 L419.6,171.7 L421.9,171.3 L424.2,171.6 L426.5,171.1 L428.7,170.4 L431.0,170.4 L432.6,172.2 L434.0,174.1 L436.0,175.5 L436.4,173.2 L436.0,170.9 L436.1,168.6 L435.4,166.2 L435.7,163.9 L436.0,161.6 L438.3,161.6 L440.4,160.8 L442.6,160.2 L444.9,160.3 L445.5,158.3 L446.1,156.3 L446.6,154.3 L446.8,152.2 L447.4,150.2 L449.4,149.5 L451.5,149.0 L453.7,148.7 L455.6,147.8 L457.6,147.0 L459.7,146.5 L461.6,145.3 L463.7,144.7 L466.0,144.9 L468.1,144.6 L470.0,143.4 L472.2,143.3 L474.5,142.9 L476.7,142.5 L478.9,142.7 L481.2,143.1 L483.4,142.3 L485.7,141.9 L487.9,141.0 L490.2,140.7 L492.2,139.3 L494.5,138.9 L494.9,140.9 L494.8,143.0 L495.7,144.9 L496.3,146.9 L496.7,148.9 L498.8,150.6 L500.4,152.7 L502.3,154.5 L504.3,155.4 L506.5,154.6 L508.4,155.9 L510.4,156.3 L512.5,156.8 L514.6,156.7 L516.7,157.3 L518.8,157.7 L521.0,157.6 L523.1,158.0 L525.2,158.2 L527.4,158.0 L529.4,159.3 L531.5,159.3 L533.7,159.1 L535.8,159.8 L537.9,160.1 L537.4,162.9 L536.8,165.6 L535.1,167.6 L533.3,169.5 L531.3,171.2 L533.1,173.1 L534.9,175.0 L536.8,176.8 L536.3,179.4 L536.1,182.0 L535.7,184.6 L537.3,186.5 L537.9,189.0 L539.7,190.1 L541.3,191.4 L542.5,193.1 L543.9,194.7 L545.7,195.7 L542.4,196.8 L540.8,194.7 L538.9,192.9 L536.8,191.3 L534.8,191.7 L533.1,193.1 L530.9,193.3 L529.1,194.3 L527.5,195.7 L525.6,196.6 L523.5,196.8 L521.9,198.4 L519.6,198.8 L518.1,200.4 L516.3,201.7 L514.1,202.3 L512.3,203.5 L510.2,204.8 L508.1,206.2 L505.8,207.2 L503.4,208.0 L502.6,210.2 L502.3,212.6 L501.2,214.7 L502.0,216.9 L502.1,219.2 L502.9,221.4 L503.4,223.6 L505.7,224.5 L507.9,225.8 L506.8,227.5 L506.1,229.5 L504.6,230.9 L503.4,232.5 L500.1,234.7 L500.6,236.9 L501.2,239.1 L501.7,241.3 L501.1,243.7 L501.9,245.9 L502.3,248.1 L503.5,250.2 L504.0,252.6 L504.6,254.9 L506.4,256.8 L506.8,259.2 L508.7,260.1 L510.2,261.6 L511.3,263.4 L513.3,264.3 L514.6,265.9 L516.3,267.2 L518.2,268.3 L520.1,269.3 L522.2,270.1 L523.6,272.0 L525.7,272.6 L527.5,273.9 L529.5,274.5 L531.6,275.2 L533.3,276.6 L535.3,277.3 L537.1,278.4 L539.1,279.3 L542.0,279.8 L543.2,281.6 L543.9,283.7 L545.6,285.2 L546.3,287.3 L546.7,289.6 L548.2,291.2 L548.4,293.4 L549.7,295.3 L549.7,297.6 L551.0,299.5 L550.9,301.8 L551.8,303.8 L552.8,305.8 L553.4,307.9 L554.9,309.3 L556.4,310.8 L556.8,313.0 L558.9,314.0 L559.4,316.2 L560.6,317.9 L562.2,319.2 L563.8,320.5 L564.8,322.4 L566.0,324.2 L567.4,325.8 L569.2,327.1 L570.9,328.5 L572.5,329.9 L574.0,331.4 L575.7,332.8 L576.8,334.7 L578.5,336.0 L580.2,337.3 L581.5,339.1 L583.6,339.5 L585.2,340.9 L587.3,341.3 L589.1,342.3 L591.1,342.9 L592.7,344.3 L594.8,344.7 L596.9,345.0 L598.8,343.7 L600.8,343.8 L602.8,343.7 L604.9,344.3 L606.9,343.9 L608.8,343.2 L610.8,342.8 L612.9,343.2 L614.9,343.2 L616.9,343.1 L618.9,342.2 L620.9,342.6 L622.9,342.0 L623.9,344.3 L625.2,346.5 L626.4,348.7 L624.5,349.6 L623.6,351.6 L621.8,352.5 L620.8,354.5 L619.3,355.7 L617.5,356.8 L618.4,359.3 L620.5,361.0 L621.5,363.4 L623.3,364.5 L625.2,365.1 L627.0,366.2 L629.1,366.5 L631.0,367.3 L632.9,368.0 L634.5,369.5 L636.5,370.0 L638.2,371.2 L640.3,371.5 L642.1,372.6 L644.3,372.4 L646.0,373.6 L648.1,373.7 L650.0,374.3 L651.9,375.0 L653.5,376.6 L655.4,377.1 L657.3,377.9 L659.4,378.0 L661.2,378.9 L663.1,379.8 L665.1,380.0 L667.0,380.8 L669.1,381.6 L671.3,382.0 L673.4,382.6 L675.4,383.5 L677.3,385.0 L679.5,385.3 L681.5,386.5 L683.7,386.7 L685.8,387.5 L687.6,388.6 L688.8,390.4 L690.3,391.8 L692.6,392.4 L693.8,394.2 L695.0,396.0 L696.9,397.2 L698.2,398.9 L698.8,401.2 L700.9,402.2 L702.1,404.1 L702.7,406.3 L704.5,407.6 L704.6,409.6 L705.0,411.6 L704.9,413.6 L704.5,415.6 L704.1,417.7 L702.9,419.5 L702.9,421.8 L701.8,423.6 L699.9,422.1 L697.5,421.6 L695.6,419.9 L693.5,418.9 L691.1,418.3 L690.2,416.4 L689.5,414.4 L689.0,412.3 L688.4,410.3 L686.3,409.3 L684.9,407.5 L682.7,406.7 L680.9,405.4 L679.8,403.1 L677.7,402.2 L675.6,401.9 L673.7,401.1 L671.7,400.8 L669.6,400.4 L667.6,400.2 L665.8,398.7 L663.8,398.2 L661.7,398.2 L659.4,398.7 L657.9,400.6 L655.8,401.5 L653.6,402.2 L652.5,404.2 L651.1,406.0 L650.6,408.3 L649.6,410.3 L648.1,411.9 L646.8,413.7 L645.6,415.6 L645.2,417.7 L644.2,419.6 L643.8,421.7 L642.9,423.6 L643.2,425.6 L643.4,427.6 L643.2,429.7 L642.9,431.7 L644.6,433.5 L647.0,434.3 L648.9,435.8 L651.0,437.0 L652.9,438.1 L654.8,439.3 L657.1,439.6 L659.1,440.4 L661.1,441.3 L663.0,442.4 L663.5,444.4 L663.2,446.6 L663.4,448.7 L664.4,450.7 L664.7,452.8 L664.7,454.9 L665.0,457.0 L665.3,459.0 L665.7,461.1 L663.9,462.0 L662.0,462.8 L660.0,463.2 L658.1,464.0 L656.0,464.0 L654.3,465.2 L652.3,465.8 L650.2,465.7 L648.3,466.5 L648.3,468.7 L647.5,470.9 L647.7,473.2 L647.0,475.3 L647.6,477.6 L647.0,479.8 L647.3,481.8 L647.3,483.9 L648.5,485.8 L648.3,487.9 L646.1,489.0 L644.9,491.3 L642.6,492.2 L641.0,494.0 L639.5,496.3 L639.0,499.0 L637.9,501.4 L637.5,504.0 L636.1,505.5 L634.8,507.0 L633.0,508.0 L630.8,508.0 L628.6,507.4 L626.4,508.2 L624.2,507.9 L623.8,505.6 L622.2,503.8 L622.3,501.3 L620.5,499.5 L620.2,497.2 L621.4,495.2 L623.3,493.8 L624.5,491.8 L626.0,490.0 L626.9,487.9 L627.5,485.9 L627.6,483.9 L627.8,481.9 L627.4,479.8 L627.9,477.8 L628.2,475.8 L629.8,474.1 L632.1,473.3 L634.0,471.9 L635.5,470.2 L637.6,469.1 L636.3,467.4 L636.6,465.1 L635.6,463.3 L634.6,461.5 L633.8,459.6 L633.4,457.5 L632.2,455.8 L631.3,453.9 L630.5,452.1 L629.6,450.2 L628.7,448.4 L627.7,446.6 L627.6,444.5 L626.5,442.7 L625.9,440.7 L624.5,439.1 L624.2,437.0 L623.3,435.1 L622.3,433.3 L621.5,431.4 L620.9,429.4 L620.8,427.3 L619.5,425.6 L618.9,423.6 L616.8,423.5 L614.7,423.1 L612.5,423.4 L610.4,423.4 L608.3,422.6 L606.2,422.5 L604.1,422.3 L602.5,420.8 L600.6,419.7 L599.1,418.1 L597.4,416.8 L595.3,415.9 L593.8,414.3 L592.1,413.0 L591.4,411.0 L590.4,409.1 L590.0,407.0 L589.4,404.9 L587.3,404.1 L585.4,402.9 L583.3,402.2 L580.9,402.1 L579.0,400.9 L576.6,400.9 L574.7,399.6 L572.8,398.6 L571.6,396.9 L570.3,395.2 L568.2,394.5 L567.2,392.6 L565.4,391.5 L562.8,389.0 L562.1,387.0 L560.5,385.7 L559.8,383.7 L559.0,381.8 L557.4,380.4 L556.5,378.6 L554.5,377.5 L552.4,376.6 L550.3,375.9 L548.3,374.7 L546.3,373.8 L544.0,373.4 L541.8,373.2 L539.9,374.0 L537.9,374.8 L535.8,375.1 L533.7,375.5 L531.6,375.5 L529.9,374.4 L528.2,373.1 L526.0,372.8 L524.6,371.1 L522.8,370.1 L520.8,369.4 L519.1,368.2 L517.4,366.8 L515.4,365.7 L514.1,363.8 L511.8,363.1 L510.8,360.8 L508.7,359.9 L507.4,358.1 L505.7,356.6 L503.8,355.4 L502.4,353.6 L501.2,351.7 L499.7,350.1 L497.4,349.2 L496.4,347.1 L494.9,345.5 L493.2,344.1 L491.6,342.5 L489.9,341.1 L488.5,339.6 L487.5,337.7 L486.2,336.1 L484.3,335.0 L483.3,333.1 L481.6,331.8 L479.5,331.6 L477.4,331.6 L475.3,331.2 L473.3,330.7 L471.5,328.9 L470.9,326.3 L469.1,324.5 L468.0,322.7 L465.8,322.2 L464.7,320.4 L463.1,319.2 L461.4,318.1 L460.0,316.6 L458.7,315.1 L456.7,313.8 L455.2,311.8 L452.8,310.9 L451.4,308.9 L450.6,306.7 L450.4,304.5 L449.5,302.3 L449.8,300.0 L449.3,297.7 L449.1,295.5 L448.3,293.3 L447.3,291.2 L446.7,289.1 L446.4,286.8 L445.4,284.8 L445.1,282.5 L444.1,280.4 L443.7,278.2 L443.3,275.9 L442.7,273.7 L442.1,271.4 L441.1,269.3 L439.9,267.6 L438.0,266.8 L436.4,265.6 L434.8,264.3 L433.1,262.9 L431.2,261.9 L429.1,261.1 L427.1,260.2 L425.2,259.3 L423.4,258.0 L421.0,257.7 L419.0,256.1 L416.5,256.2 L414.5,254.7 L412.1,254.2 L410.0,253.1 L408.2,251.6 L405.8,251.0 L403.6,250.5 L401.4,250.1 L399.1,251.0 L396.9,250.4 L395.1,251.7 L393.3,252.8 L391.8,254.4 L389.9,255.4 L388.1,256.7 L386.6,258.7 L384.9,260.5 L383.8,262.8 L381.7,264.3 L380.3,265.7 L378.8,267.1 L377.5,268.6 L375.9,269.9 L374.1,270.9 L372.9,272.5 L370.8,272.8 L368.9,273.5 L366.8,273.8 L364.9,274.6 L362.8,275.0 L360.9,271.9 L362.1,269.6 L363.3,267.3 L365.3,265.5 L366.6,263.0 L364.0,262.6 L361.6,261.6 L359.0,261.1 L357.2,260.0 L355.3,259.5 L353.3,259.2 L351.4,258.6 L350.2,256.7 L348.2,255.8 L346.9,254.0 L345.1,252.9 L344.5,250.7 L344.4,248.4 L344.2,246.2 L343.2,244.1 L344.5,242.1 L345.8,240.1 L347.6,238.4 L347.7,236.2 L347.6,234.0 L345.7,232.4 L343.7,230.9 L341.6,229.7 L340.1,227.6 L339.2,225.8 L338.4,223.9 L337.6,222.0 L336.9,220.1 L338.0,217.9 L338.3,215.6 L338.8,213.3 L340.3,211.4 L341.8,209.5 L342.9,207.4 L343.9,205.2 L345.2,203.2 L345.0,200.9 L344.3,198.6 L343.8,196.4 L343.3,194.1Z"/><path d="M618.4,494.9 L617.1,496.6 L616.3,498.6 L616.4,501.0 L615.6,502.9 L613.9,504.5 L613.2,506.5 L612.5,508.5 L612.0,510.6 L610.9,512.4 L610.1,514.4 L609.3,516.4 L608.9,518.5 L607.7,520.3 L607.3,522.5 L606.8,524.6 L605.9,526.7 L605.0,528.7 L605.1,531.0 L605.6,533.1 L607.1,534.7 L608.2,536.5 L609.3,538.2 L610.6,539.9 L611.6,541.8 L612.1,543.8 L613.1,545.7 L612.5,547.9 L611.7,549.9 L610.3,551.8 L610.0,554.1 L609.2,556.2 L608.8,558.4 L607.7,560.4 L605.6,560.6 L603.7,559.9 L601.6,559.8 L599.7,559.0 L597.8,558.1 L595.7,558.2 L593.6,558.4 L591.7,557.7 L590.2,556.0 L588.3,554.7 L586.5,553.5 L584.9,552.0 L583.0,550.8 L581.0,549.7 L579.1,548.7 L576.9,548.5 L575.2,547.2 L573.1,546.5 L570.8,546.8 L569.0,545.4 L567.0,544.8 L564.9,544.4 L562.9,543.7 L560.9,543.0 L559.1,541.9 L556.9,541.7 L555.2,540.4 L553.8,538.7 L551.8,537.8 L550.5,536.0 L548.8,534.6 L546.8,533.7 L545.2,532.3 L543.5,531.0 L541.6,529.9 L539.4,529.5 L537.3,529.2 L535.1,528.9 L533.1,528.2 L531.1,527.2 L528.8,527.2 L527.0,525.7 L524.8,525.6 L523.2,524.2 L522.5,522.1 L520.6,520.9 L519.9,518.8 L518.1,517.6 L518.6,515.5 L518.6,513.3 L518.9,511.2 L519.3,509.1 L519.4,506.9 L521.5,506.3 L523.4,505.3 L525.4,504.5 L527.5,504.2 L529.5,506.2 L531.5,508.2 L533.8,507.5 L535.6,506.1 L537.3,504.4 L539.7,504.1 L541.6,502.9 L543.5,501.5 L545.4,503.0 L547.9,503.3 L549.8,505.0 L552.3,505.3 L554.2,506.9 L556.1,507.7 L558.3,508.0 L560.3,508.6 L562.2,509.6 L564.4,509.7 L566.3,508.5 L568.5,508.7 L570.6,508.8 L572.6,507.8 L574.7,507.5 L576.9,508.0 L578.9,507.1 L581.0,506.9 L583.2,506.3 L585.1,504.8 L587.4,504.3 L589.4,503.3 L591.7,502.9 L593.8,502.4 L595.5,501.1 L597.9,501.4 L599.5,499.7 L601.8,499.8 L603.5,498.3 L605.6,497.9 L607.7,497.5 L609.9,497.3 L611.9,496.1 L614.0,495.6 L616.3,495.6Z"/><path d="M383.2,385.8 L382.9,387.8 L381.9,389.7 L381.5,391.6 L380.7,393.5 L380.1,395.4 L379.6,397.4 L379.7,400.2 L378.7,402.8 L380.5,404.2 L381.0,406.6 L382.9,408.0 L384.3,409.7 L384.9,412.1 L386.7,413.5 L386.8,415.5 L386.5,417.5 L387.1,419.5 L387.0,421.5 L387.7,423.5 L387.2,425.5 L387.0,427.5 L387.6,429.5 L387.3,431.7 L386.9,433.9 L386.7,436.2 L386.7,438.4 L387.8,440.7 L387.6,443.3 L388.5,445.6 L388.0,447.7 L388.0,449.9 L388.0,452.1 L386.6,454.1 L386.7,456.3 L385.6,458.5 L384.3,460.6 L383.0,462.8 L382.3,465.2 L383.7,467.1 L385.0,469.1 L387.0,470.4 L388.5,472.3 L390.1,473.8 L392.1,474.6 L393.9,475.9 L396.2,476.0 L398.4,475.4 L400.5,474.1 L402.8,474.1 L404.3,472.3 L406.1,470.9 L408.5,470.1 L409.9,468.1 L411.8,466.8 L413.5,465.2 L415.8,465.4 L417.9,466.1 L420.2,466.4 L422.4,467.0 L422.7,464.9 L423.4,462.9 L423.8,460.8 L424.6,458.8 L424.8,456.6 L425.0,454.5 L425.7,452.5 L425.7,450.4 L426.0,448.4 L425.8,446.3 L425.3,444.2 L426.3,442.2 L426.5,440.1 L426.6,438.0 L426.3,436.0 L426.6,433.9 L426.2,431.8 L427.1,429.8 L426.8,427.7 L427.4,425.7 L427.5,423.7 L427.8,421.6 L429.2,419.9 L429.9,418.0 L429.3,415.7 L430.6,413.9 L430.7,411.9 L431.3,409.9 L430.4,408.0 L430.2,406.0 L430.3,403.8 L429.9,401.8 L428.5,400.0 L428.7,397.9 L427.6,396.0 L427.7,393.9 L426.7,392.0 L425.2,390.4 L424.5,388.3 L423.4,386.4 L421.8,385.0 L420.6,383.2 L419.1,381.6 L416.9,381.1 L415.0,380.3 L413.5,378.7 L412.1,380.2 L411.2,382.2 L409.7,383.7 L408.1,385.0 L406.4,386.5 L404.5,387.7 L403.0,389.6 L401.3,391.1 L399.2,392.1 L396.8,392.6 L394.8,394.1 L392.3,394.3 L390.3,395.7 L388.8,393.8 L386.7,392.8 L385.0,391.2 L384.1,388.5Z"/><ellipse cx="443" cy="316" rx="3" ry="2"/><ellipse cx="462.5" cy="332.3" rx="1" ry="1"/><ellipse cx="527.9" cy="389.5" rx="1" ry="1"/><ellipse cx="559" cy="396" rx="1.6" ry="1.3"/><ellipse cx="570.4" cy="402.6" rx="1" ry="1"/><ellipse cx="605" cy="473.5" rx="1" ry="1"/><ellipse cx="593" cy="482.8" rx="1.5" ry="1.5"/><ellipse cx="597" cy="488" rx="1" ry="2"/><ellipse cx="585" cy="483.6" rx="1" ry="1"/><ellipse cx="578.3" cy="485.5" rx="1" ry="1"/><ellipse cx="539.5" cy="480.7" rx="0.8" ry="0.8"/><ellipse cx="504.7" cy="512.2" rx="1" ry="1"/><ellipse cx="512.7" cy="512.2" rx="1.2" ry="1"/><ellipse cx="503.4" cy="560.4" rx="2" ry="1.6"/><ellipse cx="534" cy="597.9" rx="0.8" ry="0.8"/><ellipse cx="524.8" cy="612" rx="1.5" ry="0.8"/><ellipse cx="430" cy="275" rx="0.6" ry="0.6"/><ellipse cx="487" cy="300" rx="0.6" ry="0.6"/></g><g fill="none" stroke="#33230f" stroke-width="0.7"><path d="M371.7,189.3 L371.9,191.3 L372.5,193.3 L372.6,195.3 L373.6,197.2 L373.0,199.3 L373.3,201.3 L374.2,203.2 L372.1,203.1 L370.1,203.9 L368.1,203.5 L366.1,203.9 L364.0,204.1 L361.9,203.1 L359.9,203.1 L357.9,204.7 L355.8,203.5 L353.8,204.0 L351.8,204.5 L349.8,204.7 L347.7,204.5"/><path d="M399.4,181.8 L399.2,184.1 L398.8,186.4 L398.0,188.7 L398.5,191.1 L398.2,193.4 L398.0,195.7 L397.2,197.6 L397.1,199.8 L395.9,201.6 L395.1,203.5 L394.2,205.3 L394.5,207.6 L393.6,209.5 L393.2,211.6 L391.9,213.3 L392.5,215.5 L393.6,217.5 L395.6,219.0 L395.2,221.7 L396.9,223.4 L397.9,225.4 L399.8,226.4 L401.4,227.7 L403.4,228.6 L405.1,229.8 L406.1,231.8 L408.2,232.7 L409.6,234.2 L410.8,236.0 L412.4,238.4 L413.3,241.1"/><path d="M366.6,263.0 L368.6,262.2 L370.7,261.7 L372.8,261.0 L374.5,259.4 L376.7,259.2 L376.9,257.0 L378.3,255.3 L379.1,253.4 L380.7,251.9 L381.5,249.9 L382.2,248.0 L383.0,246.0 L385.5,246.3 L388.0,246.7 L390.6,246.6 L392.6,245.3 L395.0,244.9 L397.0,243.7 L399.4,243.4 L401.5,242.7 L402.4,240.3 L404.5,239.6 L406.5,240.7 L408.9,240.2 L410.8,241.5"/><path d="M413.3,241.1 L413.3,239.1 L414.4,237.2 L414.8,235.3 L415.5,233.3 L414.9,231.2 L415.3,229.2 L415.6,227.2 L416.2,225.3 L417.0,223.4 L419.1,223.6 L421.2,222.5 L423.3,223.1 L425.4,222.4 L427.5,222.4 L429.7,222.5 L431.8,223.0 L433.9,222.5 L436.0,222.2 L438.1,222.1 L439.9,223.1 L441.9,223.5 L443.4,225.3 L445.3,225.8 L447.2,226.4 L449.1,227.1 L451.2,227.2 L453.2,227.5 L455.3,227.7 L457.3,227.3 L459.3,226.3 L461.3,227.2 L463.3,226.5 L465.4,226.8 L467.4,226.3 L469.4,226.0 L471.4,226.0 L473.4,226.0 L475.5,226.4 L477.5,226.5 L479.6,226.4 L481.4,227.8 L483.5,228.0 L485.4,228.5 L487.5,228.3 L489.6,228.3 L491.6,228.5 L493.7,228.7 L495.7,227.5 L497.9,228.1 L500.0,227.5 L502.0,226.9 L504.2,227.2"/><path d="M410.8,241.5 L412.9,242.3 L414.0,244.3 L415.7,245.5 L417.1,247.1 L419.4,247.5 L420.9,249.1 L423.4,248.7 L426.0,249.5 L428.5,249.1 L430.3,250.3 L432.4,250.7 L434.1,252.2 L436.1,252.9 L438.4,253.7 L440.3,255.2 L442.9,255.2 L444.9,256.7 L447.1,257.0 L448.7,258.8 L451.0,258.8 L453.1,259.4 L455.0,260.5 L457.2,261.3 L459.4,261.3 L461.7,260.8 L463.9,261.7 L465.9,261.7 L467.9,261.9 L469.9,261.0 L471.9,261.8 L473.9,260.9 L476.0,261.2 L478.0,260.8 L480.0,260.9 L482.0,262.1 L484.0,261.3 L485.1,263.0 L485.3,265.2 L487.0,266.5 L487.9,268.3 L488.7,270.4 L489.2,272.6 L490.4,274.6 L491.6,276.5 L493.7,275.9 L495.8,276.6 L497.9,276.7 L500.0,276.0 L502.1,275.9 L504.2,276.5 L506.3,275.9 L507.7,274.4 L509.1,272.8 L511.1,272.1 L512.6,270.7 L514.6,270.0"/><path d="M436.0,175.5 L436.8,177.7 L439.4,178.4 L439.9,180.8 L442.1,181.9 L442.5,184.4 L445.1,185.1 L445.4,187.6 L447.1,189.1 L448.7,190.6 L449.0,192.9 L449.6,195.1 L451.6,196.7 L452.3,198.9 L452.6,201.2 L453.7,203.2 L455.4,201.7 L457.3,200.4 L459.2,199.1 L461.3,198.2 L463.5,198.3 L465.5,197.8 L467.5,197.2 L469.3,195.8 L471.4,195.7 L473.3,194.7 L474.3,192.8 L475.4,191.0 L477.1,189.8 L478.5,188.3 L479.6,186.5 L481.5,185.5 L482.7,183.8 L483.5,181.8 L484.8,180.2 L486.4,178.7 L487.1,176.6 L487.8,174.6 L489.0,172.9 L490.1,171.1 L490.9,169.2 L490.7,167.0 L491.9,165.3 L491.0,162.9 L491.8,161.0 L492.4,159.1 L494.1,157.4 L494.0,155.3"/><path d="M453.7,203.2 L453.9,205.2 L453.7,207.2 L453.8,209.3 L453.8,211.3 L453.7,213.3 L455.5,214.5 L456.9,216.0 L459.0,216.8 L460.3,218.5 L462.6,219.0 L463.8,220.9 L465.9,221.9 L467.7,223.2 L469.8,224.2 L471.4,226.0"/><path d="M509.3,155.3 L508.5,157.4 L507.4,159.5 L506.4,161.5 L506.7,164.0 L505.3,165.9 L504.6,168.1 L504.2,170.4 L504.3,172.6 L505.6,174.6 L506.1,176.7 L505.9,179.0 L505.7,181.3 L506.8,183.3 L506.8,185.5 L508.5,186.6 L510.3,187.5 L511.5,189.4 L513.1,190.6 L515.3,191.0 L516.4,193.0 L518.9,192.9 L519.9,195.0 L521.9,195.7"/><path d="M502.4,274.6 L502.9,276.7 L502.1,278.7 L502.4,280.8 L501.6,283.0 L500.8,285.2 L499.3,287.0 L498.3,289.1 L497.6,291.2 L496.9,293.3 L496.3,295.4 L495.9,297.6 L495.2,299.6 L494.1,301.6 L493.5,303.6 L493.8,305.8 L492.9,307.8 L492.4,309.9 L492.0,311.9 L491.6,314.0 L492.0,316.2 L491.0,318.0 L489.7,319.6 L487.8,320.6 L486.7,322.4 L485.9,324.3 L484.0,325.4 L482.4,326.8 L481.6,328.7 L479.2,329.6 L477.7,331.8 L475.4,332.8"/><path d="M502.4,280.8 L504.4,281.9 L506.4,283.0 L508.6,283.5 L510.7,284.4 L512.9,285.1 L514.6,286.8 L517.0,287.0 L518.1,289.0 L519.1,291.0 L519.7,293.1 L520.5,295.2 L521.1,297.3 L522.0,299.4 L523.0,301.4 L523.2,303.7 L524.9,305.0 L526.4,306.5 L527.6,308.2 L529.5,309.3 L531.1,310.6 L532.5,312.3 L533.6,314.1 L531.8,315.4 L530.2,317.0 L528.2,318.0 L526.4,319.3 L525.0,321.1 L523.2,322.4 L521.9,324.3 L519.5,324.9 L517.7,326.2 L516.4,328.1 L514.4,329.1 L512.8,330.7 L510.9,329.9 L509.7,328.1 L507.9,327.1 L506.1,326.2 L504.5,324.9 L502.4,324.5 L500.4,323.5 L499.0,321.7 L497.4,320.1 L495.8,318.6 L493.6,317.7 L492.0,316.2"/><path d="M533.6,314.1 L535.9,314.0 L537.9,313.0 L540.0,312.4 L542.2,312.0 L543.9,310.3 L546.2,310.2 L548.4,309.9 L550.5,309.2 L552.4,307.9"/><path d="M533.6,314.1 L533.8,316.3 L532.7,318.2 L532.5,320.3 L532.5,322.4 L532.6,324.6 L531.4,326.6 L531.6,328.7 L530.8,330.7 L530.9,332.8 L530.5,334.9 L530.6,337.0 L530.6,339.2 L529.5,341.1 L531.4,342.3 L532.9,344.0 L535.1,344.8 L536.1,347.1 L538.4,347.8 L539.9,349.5 L541.9,349.9 L543.9,350.5 L545.2,352.7 L547.2,353.2 L549.0,354.2 L551.0,354.6 L553.3,354.6 L555.0,355.9 L556.7,357.0 L558.6,357.8 L559.2,359.9 L557.9,362.0 L558.8,364.0 L559.2,366.1 L558.6,368.2 L557.1,370.0 L557.0,372.6 L554.8,374.1 L554.4,376.5"/><path d="M558.6,357.8 L560.8,357.4 L562.0,355.2 L563.7,354.0 L566.3,354.3 L567.5,352.2 L569.2,351.0 L571.5,350.7 L573.2,349.5 L574.4,347.8 L576.4,346.8 L577.0,344.5 L579.3,343.7 L579.9,341.5 L581.5,340.1"/><path d="M558.6,368.2 L560.8,368.6 L562.8,368.4 L564.9,368.0 L566.8,366.5 L569.0,367.0 L571.0,366.5 L573.1,366.4 L575.2,366.1 L577.4,365.8 L579.4,366.2 L581.5,366.9 L583.6,366.9 L585.6,367.5 L587.8,367.1 L589.8,368.2 L590.3,365.8 L592.2,364.2 L592.8,361.9 L594.0,359.9 L594.0,357.8 L594.4,355.7 L593.8,353.6 L593.3,351.6 L594.5,349.5 L594.0,347.4"/><path d="M594.8,344.7 L593.6,346.6 L592.5,348.5 L592.6,351.0 L590.5,352.4 L590.7,355.0 L589.4,356.8 L590.1,358.9 L591.9,360.4 L591.9,362.8 L593.8,364.3 L594.0,366.7 L594.9,368.6 L595.8,370.6 L597.3,372.3 L597.6,374.6 L598.4,376.6 L600.1,378.2 L602.2,377.4 L604.5,377.9 L606.7,378.4 L608.8,377.9 L611.0,377.2 L613.1,376.8 L615.4,377.7 L617.5,376.8"/><path d="M600.1,378.2 L601.1,380.1 L601.1,382.5 L602.1,384.4 L603.9,386.0 L603.7,388.4 L604.9,390.3 L606.6,391.9 L606.8,394.2 L607.0,396.5 L608.8,398.1 L609.6,400.1 L610.3,402.2 L610.9,404.3 L612.4,406.0 L612.4,408.4 L613.5,410.3 L613.4,412.4 L614.4,414.3 L614.4,416.4 L615.1,418.3 L615.2,420.4 L616.2,422.3"/><path d="M617.5,376.8 L618.9,378.4 L621.1,379.1 L622.7,380.5 L623.9,382.3 L626.1,383.0 L627.0,385.2 L628.7,386.5 L631.0,387.0 L632.2,388.9 L634.4,389.6 L636.7,389.8 L638.9,390.4 L641.0,391.3 L643.2,391.8 L645.6,391.5 L646.1,393.5 L645.7,395.6 L646.2,397.6 L646.2,399.7 L648.0,401.4 L646.9,403.7 L648.4,405.5 L648.3,407.6 L648.2,409.8 L646.8,411.6 L645.8,413.4 L645.6,415.6"/><path d="M616.2,422.3 L618.2,422.7 L620.2,422.9 L622.1,423.5 L624.2,422.5 L626.3,422.4 L628.2,423.8 L630.2,423.2 L632.2,423.6 L633.7,421.9 L635.8,420.8 L636.7,418.4 L639.1,417.7 L640.3,415.6 L643.0,415.6 L645.6,415.6"/></g></g></svg>
<div class="a" style="left:838px;top:90px;width:2px;height:562px;background:#e6e5e8"></div>
<div class="t" style="left:845px;top:93px;font-size:9.5px;letter-spacing:-0.4px">Layer Styling</div>
<svg class="a" style="left:1176.5px;top:93.5px;" width="9" height="9" viewBox="0 0 16 16"><rect x="1" y="1" width="14" height="14" rx="3" fill="none" stroke="#666" stroke-width="1.8"/><path d="M4.5,11.5 L11,5 M11,5 V9.5 M11,5 H6.5" fill="none" stroke="#555" stroke-width="1.5"/></svg>
<svg class="a" style="left:1187.5px;top:93.5px;" width="9" height="9" viewBox="0 0 16 16"><rect x="1" y="1" width="14" height="14" rx="3" fill="none" stroke="#666" stroke-width="1.8"/><path d="M4.5,4.5 L11.5,11.5 M11.5,4.5 L4.5,11.5" stroke="#444" stroke-width="1.8"/></svg>
<div class="a" style="left:844px;top:107px;width:351px;height:17px;background:linear-gradient(#fcfcfc,#f1f1f2);border:1px solid #ababab;border-radius:2px"></div>
<svg class="a" style="left:847.0px;top:108.5px;" width="13" height="13" viewBox="0 0 16 16"><path d="M1,7 Q1,3 4.5,3.5 Q7,4.5 9.5,3.5 Q15,2.5 15,7 Q15,11 11.5,10.5 Q9,9.5 6.5,10.5 Q1,11.5 1,7Z" fill="#f2f2f2" stroke="#8a8a8a" stroke-width="1.1"/></svg>
<div class="t" style="left:860px;top:109.5px;letter-spacing:-0.45px">Reg01012021_WGS84</div>
<svg class="a" style="left:1183.5px;top:113.5px" width="6" height="4" viewBox="0 0 6 4"><path d="M0,0 H6 L3,3.5Z" fill="#333"/></svg>
<svg class="a" style="left:849.9px;top:131.5px;" width="15" height="15" viewBox="0 0 16 16"><path d="M1,11 Q3,6 8,8 L6,15 Q2,15 1,11Z" fill="#e04848"/><path d="M3,8 Q6,5 9,7 L7,13Z" fill="#f0c030"/><path d="M2,12 L6,14" stroke="#4a7ab8" stroke-width="2"/><path d="M7,8 L15,1" stroke="#c89030" stroke-width="2.2"/></svg>
<div class="a" style="left:873px;top:132px;width:322px;height:17px;background:linear-gradient(#fcfcfc,#f1f1f2);border:1px solid #ababab;border-radius:2px"></div>
<svg class="a" style="left:878.0px;top:135.5px;" width="10" height="10" viewBox="0 0 16 16"><rect x="2" y="1" width="12" height="3.5" fill="#4a8a4a"/><rect x="2" y="6" width="12" height="3.5" fill="#4a8a4a"/><rect x="2" y="11" width="12" height="3.5" fill="#4a8a4a"/></svg>
<div class="t" style="left:890px;top:134.5px;letter-spacing:-0.45px">Single Symbol</div>
<svg class="a" style="left:1183.5px;top:138.5px" width="6" height="4" viewBox="0 0 6 4"><path d="M0,0 H6 L3,3.5Z" fill="#333"/></svg>
<div class="a" style="left:844px;top:151px;width:27px;height:501px;background:#5e5e5e"></div>
<svg class="a" style="left:848.5px;top:154.0px;" width="16" height="16" viewBox="0 0 16 16"><path d="M1,8 L4,4 H15 V12 H4Z" fill="#f3dc4c" stroke="#a08a20" stroke-width="0.7"/><text x="4.2" y="10.8" font-size="6.5" font-family="Liberation Sans" fill="#222">abc</text></svg>
<svg class="a" style="left:848.5px;top:176.0px;" width="16" height="16" viewBox="0 0 16 16"><text x="0.5" y="11.5" font-size="8.5" font-family="Liberation Sans" fill="#fff" stroke="#111" stroke-width="1.6" paint-order="stroke">abc</text></svg>
<svg class="a" style="left:848.5px;top:199.5px;" width="16" height="16" viewBox="0 0 16 16"><path d="M1.5,5 L8,1.5 L14.5,5 V12 L8,15.5 L1.5,12Z" fill="#7ab83a"/><path d="M1.5,5 L8,8.5 L14.5,5 L8,1.5Z" fill="#e05a6a"/><path d="M8,8.5 L14.5,5 V12 L8,15.5Z" fill="#f0c830"/><circle cx="8" cy="5" r="2" fill="#f0a0b0"/></svg>
<svg class="a" style="left:848.5px;top:221.5px;" width="16" height="16" viewBox="0 0 16 16"><rect x="4.5" y="0.5" width="7" height="5" fill="#e04a6a"/><path d="M8,5 V9 M3,9 H13 M3,9 V11 M13,9 V11" stroke="#e8b030" stroke-width="1"/><rect x="0.5" y="10.5" width="6" height="5" fill="#f0c830"/><rect x="9.5" y="10.5" width="6" height="5" fill="#8ac0f0"/></svg>
<svg class="a" style="left:848.5px;top:244.5px;" width="16" height="16" viewBox="0 0 16 16"><path d="M2,8 Q4,3 9,5" fill="none" stroke="#5a9a5a" stroke-width="2.2"/><path d="M8,2 L11,5 L7,7Z" fill="#5a9a5a"/><path d="M6,11 Q10,14 14,10" fill="none" stroke="#e07030" stroke-width="2.2"/><circle cx="5" cy="9" r="2" fill="#5a9a5a"/></svg>
<div class="a" style="left:966px;top:153px;width:181px;height:96px;background:#fff;border:1px solid #b4b4b4"></div>
<div class="a" style="left:967px;top:154px;width:179px;height:13.5px;background:#efeef2"></div>
<svg class="a" style="left:970px;top:158.5px" width="6" height="4" viewBox="0 0 6 4"><path d="M0,0 H6 L3,3.5Z" fill="#444"/></svg>
<div class="a" style="left:982px;top:155px;width:12px;height:12px;background:#f69d20;border:1px solid #b87418"></div>
<div class="t" style="left:998px;top:154.8px;font-weight:bold">Fill</div>
<div class="a" style="left:996px;top:167.5px;width:12px;height:12px;background:#f69d20;border:1px solid #b87418"></div>
<div class="t" style="left:1012px;top:167.5px;letter-spacing:-0.45px">Simple Fill</div>
<div class="a" style="left:1151px;top:154px;width:19.5px;height:16px;background:linear-gradient(#fbfbfb,#eeeef0);border:1px solid #c6c6c8;border-radius:2px"></div>
<svg class="a" style="left:1155.25px;top:156.5px;" width="11" height="11" viewBox="0 0 16 16"><path d="M8,2 V14 M2,8 H14" stroke="#3a7a3a" stroke-width="4"/></svg>
<div class="a" style="left:1175px;top:154px;width:19.5px;height:16px;background:linear-gradient(#fbfbfb,#eeeef0);border:1px solid #c6c6c8;border-radius:2px"></div>
<svg class="a" style="left:1179.25px;top:156.5px;" width="11" height="11" viewBox="0 0 16 16"><path d="M2,12 L8,4 L14,12Z" fill="#ccc"/></svg>
<div class="a" style="left:1151px;top:175.5px;width:19.5px;height:16px;background:linear-gradient(#fbfbfb,#eeeef0);border:1px solid #c6c6c8;border-radius:2px"></div>
<svg class="a" style="left:1155.25px;top:178.0px;" width="11" height="11" viewBox="0 0 16 16"><path d="M3,6 H13 M3,10 H13" stroke="#ccc" stroke-width="1"/><rect x="2.5" y="5" width="11" height="6" fill="none" stroke="#ccc" stroke-width="0.8"/></svg>
<div class="a" style="left:1175px;top:175.5px;width:19.5px;height:16px;background:linear-gradient(#fbfbfb,#eeeef0);border:1px solid #c6c6c8;border-radius:2px"></div>
<svg class="a" style="left:1179.25px;top:178.0px;" width="11" height="11" viewBox="0 0 16 16"><path d="M2,4 L8,12 L14,4Z" fill="#ccc"/></svg>
<div class="a" style="left:1151px;top:196.5px;width:19.5px;height:16px;background:linear-gradient(#fbfbfb,#eeeef0);border:1px solid #c6c6c8;border-radius:2px"></div>
<svg class="a" style="left:1155.25px;top:199.0px;" width="11" height="11" viewBox="0 0 16 16"><rect x="3" y="3" width="10" height="11" fill="none" stroke="#ccc" stroke-width="1"/></svg>
<div class="a" style="left:1175px;top:196.5px;width:19.5px;height:16px;background:linear-gradient(#fbfbfb,#eeeef0);border:1px solid #c6c6c8;border-radius:2px"></div>
<svg class="a" style="left:1179.25px;top:199.0px;" width="11" height="11" viewBox="0 0 16 16"><path d="M5,8 V5 A3,3 0 0 1 11,5" fill="none" stroke="#ccc" stroke-width="1.3"/><rect x="4" y="8" width="8" height="6" fill="#ddd"/></svg>
<div class="a" style="left:896px;top:181px;width:44px;height:43px;background:#f69d20;border-right:1px solid #2a2a2a;border-bottom:1px solid #2a2a2a"></div>
<div class="a" style="left:873px;top:254px;width:316px;height:1px;background:#bdbcbf"></div>
<div class="t" style="left:873px;top:263.4px;">Color</div>
<div class="a" style="left:905px;top:261px;width:273px;height:15px;background:#fff;border:1px solid #d6d6d6;border-radius:2px"></div>
<div class="a" style="left:907px;top:263px;width:270px;height:11px;background:#f69d20;border-radius:3px"></div>
<div class="a" style="left:1179.5px;top:261px;width:9px;height:15px;background:#f7f7f8;border:1px solid #aaa"></div>
<svg class="a" style="left:1181px;top:266.5px" width="6" height="4" viewBox="0 0 6 4"><path d="M0,0 H6 L3,3.5Z" fill="#333"/></svg>
<div class="t" style="left:873px;top:284.8px;">Opacity</div>
<div class="a" style="left:905px;top:289.5px;width:176px;height:2px;background:#cfcfd2;border-top:1px solid #aaa"></div>
<div class="a" style="left:1080.5px;top:284px;width:8.5px;height:12px;background:#fafafa;border:1px solid #aaa;border-radius:1px"></div>
<div class="a" style="left:1092px;top:283px;width:70px;height:13.5px;background:#fff;border:1px solid #aaa;border-radius:2px"></div>
<div class="a" style="left:1152.5px;top:284px;width:1px;height:11.5px;background:#ccc"></div>
<div class="t" style="left:1096px;top:284px;">100.0 %</div>
<svg class="a" style="left:1154px;top:285px" width="7" height="10" viewBox="0 0 7 10"><path d="M1,4 L3.5,1 L6,4Z M1,6 L3.5,9 L6,6Z" fill="#555"/></svg>
<svg class="a" style="left:1170.5px;top:283.5px;" width="13" height="13" viewBox="0 0 16 16"><path d="M3,3 H12 M5,6 H13 M5,9 H13 M5,12 H10 M3,3 L1,7 L3,12" fill="none" stroke="#555" stroke-width="1.2"/><path d="M11,13 L13,15 L15,13Z" fill="#555"/></svg>
<div class="t" style="left:873px;top:306.2px;">Unit</div>
<div class="a" style="left:904px;top:303px;width:284.5px;height:15.5px;background:linear-gradient(#fcfcfc,#f1f1f2);border:1px solid #ababab;border-radius:2px"></div>
<div class="t" style="left:907px;top:305px;letter-spacing:-0.45px">Millimeters</div>
<div class="a" style="left:1179px;top:310.5px;width:4px;height:1.6px;background:#333"></div>
<div class="a" style="left:873px;top:323px;width:316px;height:1px;background:#d8d7da"></div>
<div class="a" style="left:874px;top:327px;width:293px;height:15px;background:#fff;border:1px solid #bbb"></div>
<svg class="a" style="left:879.0px;top:329.5px;" width="10" height="10" viewBox="0 0 16 16"><circle cx="6" cy="6" r="4" fill="none" stroke="#777" stroke-width="1.1"/><path d="M9,9 L14,14" stroke="#777" stroke-width="1.3"/></svg>
<div class="t" style="left:894px;top:328.5px;letter-spacing:-0.4px">Favorites</div>
<svg class="a" style="left:1137.0px;top:329.5px;" width="10" height="10" viewBox="0 0 16 16"><path d="M1,8 L5,3 H15 V13 H5Z" fill="#999"/><path d="M7,5.5 L12,10.5 M12,5.5 L7,10.5" stroke="#fff" stroke-width="1.2"/></svg>
<div class="a" style="left:1152.5px;top:328px;width:1px;height:13px;background:#ccc"></div>
<svg class="a" style="left:1156.5px;top:332.5px" width="6" height="4" viewBox="0 0 6 4"><path d="M0,0 H6 L3,3.5Z" fill="#333"/></svg>
<svg class="a" style="left:1174.0px;top:328.5px;" width="12" height="12" viewBox="0 0 16 16"><circle cx="5" cy="4" r="3" fill="#d9583b"/><rect x="2" y="8" width="6" height="7" fill="#6fae6f"/><path d="M10,8 L15,2" stroke="#3a6fb0" stroke-width="1.8"/><text x="10" y="15" font-size="6" fill="#333" font-family="Liberation Sans">a</text></svg>
<div class="a" style="left:873px;top:346px;width:316px;height:235px;background:#fff;border:1px solid #b4b4b4"></div>
<div class="a" style="left:1178px;top:347px;width:11px;height:233px;background:#fafafb;border-left:1px solid #d0d0d0;border-right:1px solid #d0d0d0"></div>
<div class="a" style="left:1179px;top:448px;width:9px;height:122.5px;background:#dcdbde"></div>
<svg class="a" style="left:1180px;top:349px" width="6" height="4" viewBox="0 0 6 4"><path d="M0,4 H6 L3,0Z" fill="#444"/></svg>
<svg class="a" style="left:1180px;top:574px" width="6" height="4" viewBox="0 0 6 4"><path d="M0,0 H6 L3,4Z" fill="#444"/></svg>
<div class="t" style="left:878px;top:353px;font-size:12px;font-weight:bold;letter-spacing:-0.2px;color:#111">Project Styles</div>
<div class="t" style="left:878px;top:372.5px;font-size:12px;font-weight:bold;letter-spacing:-0.2px;color:#111">Default</div>
<div class="a" style="left:878px;top:385.5px;width:295px;height:1px;background:#c8c8c8"></div>
<svg class="a" style="left:898.5px;top:400.5px" width="45" height="38" viewBox="0 0 45 38"><defs><linearGradient id="pl" x1="0" y1="0" x2="1" y2="1"><stop offset="0" stop-color="#4a10a0"/><stop offset="0.35" stop-color="#9a1ea8"/><stop offset="0.6" stop-color="#d04a78"/><stop offset="0.8" stop-color="#f08a40"/><stop offset="1" stop-color="#f6d030"/></linearGradient></defs><rect x="0.5" y="0.5" width="44" height="37" fill="url(#pl)" stroke="#222" stroke-width="1"/></svg>
<div class="a" style="left:991px;top:400.5px;width:44px;height:38px;background:#999"></div>
<svg class="a" style="left:1083px;top:400.5px" width="45" height="38" viewBox="0 0 45 38"><defs><clipPath id="c1083400.5"><rect width="45" height="38"/></clipPath></defs><rect x="0" y="0" width="45" height="38" fill="#fff"/><g clip-path="url(#c1083400.5)" stroke="#111" stroke-width="0.8"><path d="M-38,38 L0,0"/><path d="M-31,38 L7,0"/><path d="M-24,38 L14,0"/><path d="M-17,38 L21,0"/><path d="M-10,38 L28,0"/><path d="M-3,38 L35,0"/><path d="M4,38 L42,0"/><path d="M11,38 L49,0"/><path d="M18,38 L56,0"/><path d="M25,38 L63,0"/><path d="M32,38 L70,0"/><path d="M39,38 L77,0"/><path d="M46,38 L84,0"/><path d="M53,38 L91,0"/><path d="M60,38 L98,0"/><path d="M67,38 L105,0"/><path d="M74,38 L112,0"/><path d="M81,38 L119,0"/></g><rect x="0.75" y="0.75" width="43.5" height="36.5" fill="none" stroke="#111" stroke-width="1.5"/></svg>
<svg class="a" style="left:899px;top:500.5px" width="44" height="38" viewBox="0 0 44 38"><defs><clipPath id="c899500.5"><rect width="44" height="38"/></clipPath></defs><rect x="0" y="0" width="44" height="38" fill="#fff"/><g clip-path="url(#c899500.5)" stroke="#111" stroke-width="0.8"><path d="M-38,0 L0,38"/><path d="M-31,0 L7,38"/><path d="M-24,0 L14,38"/><path d="M-17,0 L21,38"/><path d="M-10,0 L28,38"/><path d="M-3,0 L35,38"/><path d="M4,0 L42,38"/><path d="M11,0 L49,38"/><path d="M18,0 L56,38"/><path d="M25,0 L63,38"/><path d="M32,0 L70,38"/><path d="M39,0 L77,38"/><path d="M46,0 L84,38"/><path d="M53,0 L91,38"/><path d="M60,0 L98,38"/><path d="M67,0 L105,38"/><path d="M74,0 L112,38"/><path d="M81,0 L119,38"/></g><rect x="0.75" y="0.75" width="42.5" height="36.5" fill="none" stroke="#111" stroke-width="1.5"/></svg>
<svg class="a" style="left:991px;top:500.5px" width="44" height="38" viewBox="0 0 44 38"><defs><clipPath id="c991500.5"><rect width="44" height="38"/></clipPath></defs><rect x="0" y="0" width="44" height="38" fill="#fff"/><g clip-path="url(#c991500.5)" stroke="#111" stroke-width="0.8"><path d="M-38,38 L0,0"/><path d="M-31,38 L7,0"/><path d="M-24,38 L14,0"/><path d="M-17,38 L21,0"/><path d="M-10,38 L28,0"/><path d="M-3,38 L35,0"/><path d="M4,38 L42,0"/><path d="M11,38 L49,0"/><path d="M18,38 L56,0"/><path d="M25,38 L63,0"/><path d="M32,38 L70,0"/><path d="M39,38 L77,0"/><path d="M46,38 L84,0"/><path d="M53,38 L91,0"/><path d="M60,38 L98,0"/><path d="M67,38 L105,0"/><path d="M74,38 L112,0"/><path d="M81,38 L119,0"/><path d="M-38,0 L0,38"/><path d="M-31,0 L7,38"/><path d="M-24,0 L14,38"/><path d="M-17,0 L21,38"/><path d="M-10,0 L28,38"/><path d="M-3,0 L35,38"/><path d="M4,0 L42,38"/><path d="M11,0 L49,38"/><path d="M18,0 L56,38"/><path d="M25,0 L63,38"/><path d="M32,0 L70,38"/><path d="M39,0 L77,38"/><path d="M46,0 L84,38"/><path d="M53,0 L91,38"/><path d="M60,0 L98,38"/><path d="M67,0 L105,38"/><path d="M74,0 L112,38"/><path d="M81,0 L119,38"/></g><rect x="0.75" y="0.75" width="42.5" height="36.5" fill="none" stroke="#111" stroke-width="1.5"/></svg>
<div class="a" style="left:1083px;top:500.5px;width:45px;height:38px;background:#fff;border:2px solid #4a80c0;border-radius:2px"></div>
<div class="t" style="left:870px;top:462px;width:100px;text-align:center;letter-spacing:-0.45px">gradient  plasma</div>
<div class="t" style="left:963px;top:462px;width:100px;text-align:center;letter-spacing:-0.45px">gray 3 fill</div>
<div class="t" style="left:1055px;top:462px;width:100px;text-align:center;letter-spacing:-0.45px">hashed black /</div>
<div class="t" style="left:871px;top:562.5px;width:100px;text-align:center;letter-spacing:-0.45px">hashed black \</div>
<div class="t" style="left:963px;top:562.5px;width:100px;text-align:center;letter-spacing:-0.45px">hashed black X</div>
<div class="t" style="left:1055px;top:562.5px;width:100px;text-align:center;letter-spacing:-0.45px">outline blue</div>
<div class="a" style="left:874px;top:587px;width:15px;height:15px;background:#dfe6ef;border:1px solid #b8c4d4"></div>
<svg class="a" style="left:876.5px;top:589.5px;" width="10" height="10" viewBox="0 0 16 16"><rect x="1" y="1" width="14" height="14" fill="#dfe6ef" stroke="#8aa6c8" stroke-width="0.8"/><path d="M4,3 v10 M8,3 v10 M12,3 v10" stroke="#5a80b0" stroke-width="1" stroke-dasharray="1.5 1.5"/></svg>
<svg class="a" style="left:893.5px;top:589.5px;" width="10" height="10" viewBox="0 0 16 16"><rect x="2" y="2" width="12" height="12" fill="#fff" stroke="#8aa6c8" stroke-width="0.8"/><path d="M4,5 h8 M4,8 h8 M4,11 h8" stroke="#8aa6c8" stroke-width="1"/></svg>
<div class="a" style="left:1071px;top:587px;width:59px;height:15px;background:linear-gradient(#fcfcfc,#f1f1f2);border:1px solid #b0b0b0;border-radius:2px"></div>
<div class="t" style="left:1074px;top:588.5px;letter-spacing:-0.5px">Save Symbol...</div>
<div class="a" style="left:1132px;top:587px;width:57px;height:15px;background:linear-gradient(#fcfcfc,#f1f1f2);border:1px solid #b0b0b0;border-radius:2px"></div>
<div class="t" style="left:1139px;top:588.5px;letter-spacing:-0.45px">Advanced</div>
<svg class="a" style="left:1179px;top:592.5px" width="6" height="4" viewBox="0 0 6 4"><path d="M0,0 H6 L3,3.5Z" fill="#333"/></svg>
<svg class="a" style="left:877px;top:619px" width="5" height="8" viewBox="0 0 5 8"><path d="M0,0 V8 L5,4Z" fill="#222"/></svg>
<div class="t" style="left:887.5px;top:617px;font-weight:bold;letter-spacing:-0.3px">Layer Rendering</div>
<div class="a" style="left:873px;top:633px;width:16px;height:18px;background:linear-gradient(#fcfcfc,#f1f1f2);border:1px solid #c0c0c0;border-radius:2px"></div>
<svg class="a" style="left:876.0px;top:637.0px;" width="10" height="10" viewBox="0 0 16 16"><path d="M12,14 V9 Q12,5 7,5 H3 M6,2 L3,5 L6,8" fill="none" stroke="#e06a30" stroke-width="2.2"/></svg>
<div class="a" style="left:893px;top:633px;width:16px;height:18px;background:linear-gradient(#fcfcfc,#f1f1f2);border:1px solid #c0c0c0;border-radius:2px"></div>
<svg class="a" style="left:896.0px;top:637.0px;" width="10" height="10" viewBox="0 0 16 16"><path d="M4,14 V9 Q4,5 9,5 H13 M10,2 L13,5 L10,8" fill="none" stroke="#6aae5a" stroke-width="2.2"/></svg>
<div class="a" style="left:1077.5px;top:637px;width:9px;height:9px;background:#fff;border:1px solid #666"></div>
<svg class="a" style="left:1078.5px;top:638px" width="7" height="7" viewBox="0 0 7 7"><path d="M1,3.5 L3,6 L6.5,0.5" fill="none" stroke="#111" stroke-width="1.2"/></svg>
<div class="t" style="left:1089px;top:636px;letter-spacing:-0.45px">Live update</div>
<div class="a" style="left:1138.5px;top:633px;width:55.5px;height:18px;background:linear-gradient(#fcfcfc,#f1f1f2);border:1px solid #b0b0b0;border-radius:2px"></div>
<div class="t" style="left:1156px;top:636px;">Apply</div>
<div class="a" style="left:1px;top:652px;width:1196px;height:20px;background:#f0eef1"></div>
<div class="a" style="left:4px;top:655px;width:141px;height:14px;background:#fff;border:1px solid #c8c8c8;border-radius:1px"></div>
<svg class="a" style="left:8.5px;top:657.5px;" width="9" height="9" viewBox="0 0 16 16"><circle cx="6" cy="6" r="4" fill="none" stroke="#777" stroke-width="1.1"/><path d="M9,9 L14,14" stroke="#777" stroke-width="1.3"/></svg>
<div class="t" style="left:23px;top:656px;color:#999;letter-spacing:-0.45px">Type to locate (Ctrl+K)</div>
<div class="t" style="left:150px;top:656px;letter-spacing:-0.45px">Validation finished (0 errors found).</div>
<div class="t" style="left:608.5px;top:656px;letter-spacing:-0.45px">Coordinate</div>
<div class="a" style="left:650px;top:655px;width:71px;height:14px;background:#fff;border:1px solid #aaa"></div>
<div class="t" style="left:654px;top:656px;letter-spacing:-0.45px">775004,4110119</div>
<svg class="a" style="left:725.5px;top:656.5px;" width="11" height="11" viewBox="0 0 16 16"><path d="M2,2 L13,13 M13,2 L2,13" stroke="#555" stroke-width="1.2"/><circle cx="8" cy="8" r="3" fill="none" stroke="#555" stroke-width="1.2"/></svg>
<div class="t" style="left:744px;top:656px;letter-spacing:-0.45px">Scale</div>
<div class="a" style="left:765px;top:655px;width:57.5px;height:14px;background:#fff;border:1px solid #aaa"></div>
<div class="a" style="left:813px;top:656px;width:1px;height:12px;background:#ccc"></div>
<div class="t" style="left:768px;top:656px;letter-spacing:-0.45px">1:7253278</div>
<svg class="a" style="left:814.5px;top:660px" width="6" height="4" viewBox="0 0 6 4"><path d="M0,0 H6 L3,3.5Z" fill="#444"/></svg>
<svg class="a" style="left:827.5px;top:656.5px;" width="11" height="11" viewBox="0 0 16 16"><path d="M5,8 V5 A3,3 0 0 1 11,5 V8" fill="none" stroke="#666" stroke-width="1.5"/><rect x="3" y="8" width="10" height="7" rx="1" fill="#777"/></svg>
<div class="t" style="left:845px;top:656px;letter-spacing:-0.45px">Magnifier</div>
<div class="a" style="left:880px;top:655px;width:57px;height:14px;background:#fff;border:1px solid #aaa"></div>
<div class="t" style="left:883px;top:656px;letter-spacing:-0.45px">100%</div>
<svg class="a" style="left:929px;top:657px" width="6" height="10" viewBox="0 0 6 10"><path d="M0.5,4 L3,1 L5.5,4Z M0.5,6 L3,9 L5.5,6Z" fill="#666"/></svg>
<div class="t" style="left:944.5px;top:656px;letter-spacing:-0.45px">Rotation</div>
<div class="a" style="left:981.5px;top:655px;width:57.5px;height:14px;background:#fff;border:1px solid #aaa"></div>
<div class="t" style="left:984px;top:656px;letter-spacing:-0.45px">0.0 °</div>
<svg class="a" style="left:1031px;top:657px" width="6" height="10" viewBox="0 0 6 10"><path d="M0.5,4 L3,1 L5.5,4Z M0.5,6 L3,9 L5.5,6Z" fill="#666"/></svg>
<div class="a" style="left:1045px;top:657px;width:9px;height:9px;background:#fff;border:1px solid #888"></div>
<svg class="a" style="left:1046px;top:658px" width="7" height="7" viewBox="0 0 7 7"><path d="M1,3.5 L3,6 L6.5,0.5" fill="none" stroke="#111" stroke-width="1.2"/></svg>
<div class="t" style="left:1057.5px;top:656px;letter-spacing:-0.45px">Render</div>
<svg class="a" style="left:1087.5px;top:656.5px;" width="11" height="11" viewBox="0 0 16 16"><circle cx="8" cy="8" r="6" fill="none" stroke="#666" stroke-width="1.1"/><path d="M2,6 H14 M2,10 H14 M8,2 V14" stroke="#666" stroke-width="0.9"/><rect x="3" y="11" width="10" height="3" fill="#777"/></svg>
<div class="t" style="left:1097px;top:656px;letter-spacing:-0.45px">EPSG:32632</div>
<svg class="a" style="left:1162.5px;top:656.5px;" width="11" height="11" viewBox="0 0 16 16"><path d="M2,3 Q2,1 5,1 H11 Q14,1 14,4 V9 Q14,11 11,11 H7 L4,14 V11 Q2,11 2,9Z" fill="#777"/><circle cx="5.5" cy="6" r="1" fill="#fff"/><circle cx="8" cy="6" r="1" fill="#fff"/><circle cx="10.5" cy="6" r="1" fill="#fff"/></svg>
<div class="a" style="left:0px;top:672px;width:1200px;height:1px;background:#a8a8a8"></div>
<svg class="a" style="left:257.3px;top:93.5px;" width="17" height="17" viewBox="0 0 16 16"><circle cx="8" cy="8" r="6.5" fill="none" stroke="#fff" stroke-width="1.8"/><path d="M3.5,12.5 L12.5,3.5" stroke="#fff" stroke-width="1.8"/></svg>
<div class="t" style="left:281px;top:96px;color:#fff;letter-spacing:-0.45px">Qt: Unable to obtain clipboard.</div>
<div class="t" style="left:771px;top:96px;color:#fff;letter-spacing:-0.4px;font-weight:bold"><i>1 more</i></div>
<svg class="a" style="left:807.5px;top:94.5px;" width="14" height="14" viewBox="0 0 16 16"><circle cx="8" cy="8" r="7" fill="#2a1a1e"/><path d="M5,5 L11,11 M11,5 L5,11" stroke="#fff" stroke-width="2"/></svg>
<svg class="a" style="left:823px;top:99.5px" width="6" height="4" viewBox="0 0 6 4"><path d="M0,0 H6 L3,3.5Z" fill="#fff"/></svg>
<div class="a" style="left:217.5px;top:87px;width:13px;height:1px;background:#000"></div>
<div class="a" style="left:223px;top:81px;width:1px;height:13px;background:#000"></div></body></html>
